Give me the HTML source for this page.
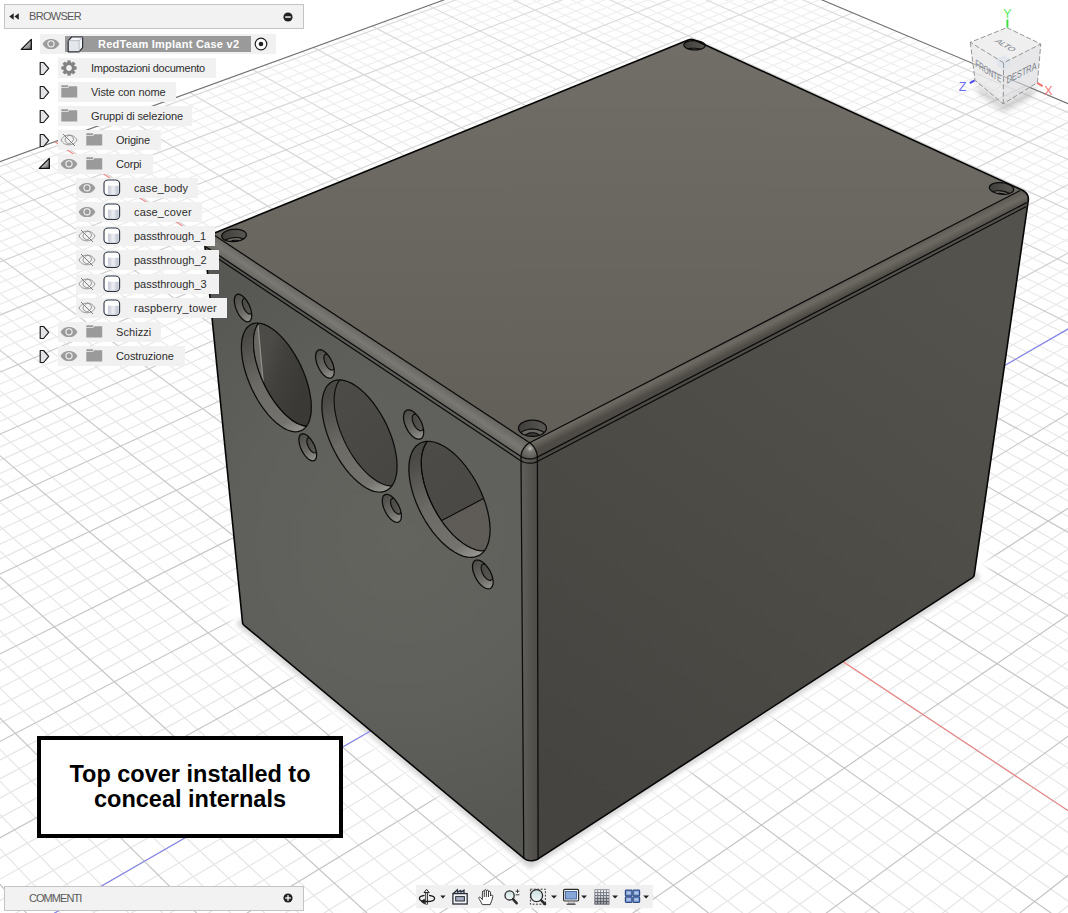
<!DOCTYPE html>
<html><head><meta charset="utf-8"><title>RedTeam Implant Case v2</title>
<style>
html,body{margin:0;padding:0;background:#fff;}
body{width:1068px;height:913px;position:relative;overflow:hidden;font-family:"Liberation Sans",sans-serif;}
svg#scene{position:absolute;left:0;top:0;}
.gm{stroke:#e6e6e6;stroke-width:1.2;fill:none;}
.gM{stroke:#c6c6c6;stroke-width:1.2;fill:none;}
.gb{fill:none;stroke:#707070;stroke-width:1.1;}
.ax{stroke:#f08585;stroke-width:1.1;fill:none;}
.az{stroke:#8585f0;stroke-width:1.1;fill:none;}
.e{stroke:#0c0c0c;stroke-width:1.25;stroke-linecap:round;stroke-linejoin:round;}
path.e:not([fill]){fill:none;}
.e2{stroke:#0c0c0c;stroke-width:1.1;stroke-linejoin:round;}
.s{fill:none;stroke:#060606;stroke-width:1.6;stroke-linejoin:round;}

.ui{position:absolute;left:0;top:0;width:1068px;height:913px;font-size:11px;color:#2e2e2e;}
.ui div,.ui span,.ui svg{position:absolute;}
.hdr{left:4px;width:298px;height:23px;background:#f2f2f2;border:1px solid #c4c4c4;box-sizing:content-box;}
.hdr span{left:24px;top:5px;color:#5a5a5a;font-size:11px;letter-spacing:-0.7px;line-height:13px;white-space:nowrap;}
.rb{background:#f1f1f1;height:19.5px;}
.t{white-space:nowrap;line-height:13px;letter-spacing:-0.23px;font-size:11px;}
.hl{background:#9a9a9a;height:16px;}
.tb{color:#fff;font-weight:bold;letter-spacing:0.25px;white-space:nowrap;line-height:13px;font-size:11px;}
.note{left:37px;top:736px;width:298px;height:93.5px;border:4px solid #000;background:#fff;box-sizing:content-box;}
.note div{left:0;width:298px;text-align:center;font-weight:bold;font-size:23.5px;line-height:26px;color:#000;white-space:nowrap;}
.tbar{left:416px;top:886px;width:238px;height:22px;background:#f0f0f0;}

</style></head><body>
<svg id="scene" width="1068" height="913" viewBox="0 0 1068 913">
<defs>
<filter id="blur" x="-20%" y="-20%" width="140%" height="140%"><feGaussianBlur stdDeviation="4"/></filter>
<filter id="b2" x="-20%" y="-20%" width="140%" height="140%"><feGaussianBlur stdDeviation="2.2"/></filter>
<linearGradient id="fade" gradientUnits="userSpaceOnUse" x1="0" y1="0" x2="0" y2="520"><stop offset="0" stop-color="#fff" stop-opacity="0.4"/><stop offset="1" stop-color="#fff" stop-opacity="0"/></linearGradient>
<filter id="b1" x="-100%" y="-100%" width="300%" height="300%"><feGaussianBlur stdDeviation="0.8"/></filter>
<radialGradient id="gl" gradientUnits="userSpaceOnUse" cx="400" cy="540" r="300"><stop offset="0" stop-color="#64645f"/><stop offset="0.55" stop-color="#5f5f5b"/><stop offset="1" stop-color="#575753"/></radialGradient>
<linearGradient id="gr" gradientUnits="userSpaceOnUse" x1="580" y1="800" x2="960" y2="280"><stop offset="0" stop-color="#464440"/><stop offset="0.5" stop-color="#4d4b46"/><stop offset="1" stop-color="#54524d"/></linearGradient>
<linearGradient id="gf" gradientUnits="userSpaceOnUse" x1="523" y1="0" x2="538" y2="0"><stop offset="0" stop-color="#5e5d59"/><stop offset="1" stop-color="#4e4b46"/></linearGradient>
<linearGradient id="gt" gradientUnits="userSpaceOnUse" x1="0" y1="40" x2="0" y2="445"><stop offset="0" stop-color="#716e67"/><stop offset="1" stop-color="#625f59"/></linearGradient>
<linearGradient id="gfl" gradientUnits="userSpaceOnUse" x1="372" y1="338" x2="362" y2="353"><stop offset="0" stop-color="#67655f"/><stop offset="0.5" stop-color="#7b7973"/><stop offset="1" stop-color="#62615c"/></linearGradient>
<linearGradient id="gfr" gradientUnits="userSpaceOnUse" x1="770" y1="316" x2="777" y2="330"><stop offset="0" stop-color="#5e5b55"/><stop offset="0.45" stop-color="#6d6a63"/><stop offset="1" stop-color="#4e4b46"/></linearGradient>
<radialGradient id="gsp" gradientUnits="userSpaceOnUse" cx="530" cy="448" r="12"><stop offset="0" stop-color="#8a8882"/><stop offset="1" stop-color="#55534e"/></radialGradient>
<linearGradient id="gw0" gradientUnits="userSpaceOnUse" x1="240" y1="340" x2="300" y2="440"><stop offset="0" stop-color="#4a4945"/><stop offset="0.4" stop-color="#6b6a65"/><stop offset="0.8" stop-color="#73726d"/><stop offset="1" stop-color="#a5a49e"/></linearGradient>
<linearGradient id="gw1" gradientUnits="userSpaceOnUse" x1="322" y1="400" x2="385" y2="500"><stop offset="0" stop-color="#4a4945"/><stop offset="0.4" stop-color="#6b6a65"/><stop offset="0.8" stop-color="#73726d"/><stop offset="1" stop-color="#a5a49e"/></linearGradient>
<linearGradient id="gw2" gradientUnits="userSpaceOnUse" x1="410" y1="460" x2="475" y2="565"><stop offset="0" stop-color="#4a4945"/><stop offset="0.4" stop-color="#6b6a65"/><stop offset="0.8" stop-color="#73726d"/><stop offset="1" stop-color="#a5a49e"/></linearGradient>
<linearGradient id="gi0" gradientUnits="userSpaceOnUse" x1="260" y1="370" x2="305" y2="385"><stop offset="0" stop-color="#4d4b47"/><stop offset="0.4" stop-color="#42403c"/><stop offset="1" stop-color="#3b3936"/></linearGradient>
<linearGradient id="gi1" gradientUnits="userSpaceOnUse" x1="330" y1="400" x2="400" y2="470"><stop offset="0" stop-color="#4d4b47"/><stop offset="1" stop-color="#484642"/></linearGradient>
<linearGradient id="gi2" gradientUnits="userSpaceOnUse" x1="420" y1="450" x2="490" y2="520"><stop offset="0" stop-color="#4d4b47"/><stop offset="1" stop-color="#4a4844"/></linearGradient>
<linearGradient id="gs" gradientUnits="objectBoundingBox" x1="0.3" y1="0" x2="0.7" y2="1"><stop offset="0" stop-color="#4e4d49"/><stop offset="0.6" stop-color="#6a6964"/><stop offset="1" stop-color="#8e8d88"/></linearGradient>
<linearGradient id="gsi" gradientUnits="objectBoundingBox" x1="0" y1="0" x2="1" y2="0.3"><stop offset="0" stop-color="#484642"/><stop offset="1" stop-color="#5a5853"/></linearGradient>
<linearGradient id="gsc" gradientUnits="objectBoundingBox" x1="0" y1="0" x2="1" y2="0"><stop offset="0" stop-color="#3f3e3a"/><stop offset="1" stop-color="#5a5853"/></linearGradient>
<clipPath id="csil"><path d="M204.7 244.5L204.7 242.8L204.9 241.8L205.3 240.2L206.1 238.7L206.5 237.9L207.6 236.8L208.2 236.1L209.1 235.5L210.1 234.9L210.9 234.5L688.1 40.0L688.9 39.8L689.7 39.6L690.3 39.5L691.0 39.4L691.6 39.4L692.2 39.5L692.9 39.6L693.4 39.7L694.2 39.9L695.0 40.2L1022.9 190.4L1023.6 190.8L1024.6 191.5L1025.4 192.2L1026.0 192.8L1027.0 194.0L1027.6 195.4L1028.0 196.3L1028.3 197.9L1028.4 198.8L1028.3 200.5L974.2 575.1L973.9 576.1L973.2 577.0L972.2 577.8L538.1 858.9L536.5 859.7L534.7 860.3L532.7 860.7L530.8 860.7L528.8 860.5L526.9 860.0L525.2 859.2L523.8 858.2L244.1 625.3L243.2 624.4L242.7 623.4L242.5 622.3Z"/></clipPath>
<clipPath id="co0"><path d="M241.7 353.7L241.4 348.4L241.5 343.5L242.1 339.0L243.1 335.0L244.5 331.5L246.3 328.5L248.5 326.2L251.0 324.4L253.9 323.4L257.1 323.0L260.5 323.4L264.1 324.4L267.9 326.1L271.8 328.5L275.8 331.5L279.8 335.1L283.7 339.3L287.6 343.9L291.3 349.1L294.8 354.6L298.1 360.4L301.1 366.4L303.8 372.6L306.1 378.8L308.0 385.0L309.5 391.1L310.5 397.0L311.2 402.7L311.3 408.0L311.1 412.9L310.3 417.3L309.2 421.3L307.6 424.6L305.6 427.4L303.3 429.5L300.6 430.9L297.6 431.7L294.4 431.8L291.0 431.2L287.4 430.0L283.6 428.1L279.8 425.6L275.9 422.5L272.1 418.9L268.3 414.8L264.6 410.2L261.1 405.3L257.7 400.0L254.6 394.4L251.7 388.7L249.2 382.8L246.9 376.8L245.0 370.8L243.5 365.0L242.4 359.2Z"/></clipPath>
<clipPath id="ci0"><path d="M253.7 348.3L253.5 343.1L253.6 338.2L254.2 333.7L255.2 329.6L256.7 326.1L258.5 323.2L260.7 320.8L263.3 319.1L266.2 318.0L269.3 317.7L272.8 318.0L276.4 319.0L280.2 320.7L284.1 323.0L288.1 326.0L292.1 329.6L296.1 333.8L299.9 338.4L303.6 343.5L307.1 349.0L310.4 354.8L313.4 360.8L316.0 366.9L318.3 373.1L320.2 379.3L321.7 385.4L322.8 391.3L323.4 396.9L323.5 402.3L323.2 407.2L322.4 411.6L321.3 415.5L319.7 418.9L317.7 421.6L315.3 423.8L312.6 425.2L309.6 426.0L306.4 426.1L302.9 425.6L299.3 424.3L295.5 422.5L291.7 420.0L287.9 416.9L284.0 413.3L280.2 409.2L276.5 404.7L273.0 399.8L269.6 394.5L266.5 389.0L263.7 383.2L261.1 377.3L258.9 371.4L257.0 365.4L255.5 359.6L254.4 353.8Z"/></clipPath>
<clipPath id="co1"><path d="M322.0 410.3L321.9 405.0L322.2 400.0L323.0 395.5L324.2 391.4L325.8 387.9L327.9 385.0L330.4 382.7L333.3 381.0L336.4 380.1L339.9 379.8L343.7 380.3L347.6 381.5L351.8 383.4L356.0 386.0L360.3 389.2L364.6 393.1L368.8 397.5L372.9 402.4L376.8 407.8L380.5 413.5L384.0 419.6L387.1 425.8L389.8 432.2L392.2 438.7L394.1 445.1L395.5 451.3L396.5 457.4L397.0 463.2L397.0 468.6L396.6 473.6L395.6 478.1L394.2 482.0L392.4 485.3L390.1 488.0L387.4 490.1L384.5 491.4L381.2 492.1L377.6 492.0L373.8 491.3L369.9 489.9L365.8 487.8L361.7 485.1L357.6 481.8L353.5 477.9L349.4 473.6L345.5 468.8L341.8 463.6L338.2 458.1L335.0 452.3L332.0 446.3L329.4 440.2L327.1 434.1L325.2 427.9L323.7 421.9L322.6 416.0Z"/></clipPath>
<clipPath id="co2"><path d="M408.9 471.6L408.9 466.1L409.4 461.1L410.4 456.5L411.9 452.4L413.8 448.9L416.2 446.0L419.1 443.8L422.3 442.3L425.8 441.4L429.7 441.4L433.8 442.0L438.1 443.4L442.6 445.5L447.2 448.3L451.9 451.8L456.5 455.9L461.0 460.6L465.4 465.8L469.5 471.5L473.5 477.5L477.1 483.8L480.3 490.3L483.1 497.0L485.5 503.6L487.4 510.2L488.8 516.7L489.7 522.9L490.1 528.8L489.9 534.3L489.2 539.3L488.0 543.8L486.3 547.8L484.2 551.1L481.6 553.7L478.6 555.7L475.2 556.9L471.6 557.4L467.6 557.2L463.5 556.3L459.2 554.6L454.8 552.3L450.3 549.4L445.8 545.8L441.4 541.7L437.1 537.1L432.9 532.1L429.0 526.6L425.2 520.8L421.8 514.8L418.7 508.6L416.0 502.3L413.7 495.9L411.8 489.6L410.4 483.4L409.4 477.3Z"/></clipPath>
<clipPath id="ci2"><path d="M421.3 465.3L421.3 459.9L421.8 454.9L422.9 450.3L424.4 446.2L426.3 442.7L428.8 439.8L431.6 437.6L434.8 436.0L438.4 435.2L442.3 435.1L446.4 435.7L450.8 437.1L455.3 439.2L459.9 442.0L464.5 445.4L469.1 449.5L473.6 454.2L478.0 459.4L482.2 465.0L486.1 471.0L489.7 477.3L492.9 483.7L495.7 490.4L498.1 497.0L500.0 503.6L501.3 510.0L502.2 516.2L502.6 522.1L502.4 527.6L501.6 532.6L500.4 537.2L498.7 541.1L496.5 544.4L493.9 547.0L490.9 549.0L487.5 550.2L483.8 550.8L479.9 550.6L475.7 549.7L471.4 548.1L467.0 545.8L462.5 542.9L458.0 539.3L453.6 535.3L449.3 530.7L445.1 525.6L441.2 520.2L437.5 514.5L434.1 508.5L431.0 502.3L428.3 496.0L426.0 489.6L424.1 483.3L422.7 477.1L421.7 471.1Z"/></clipPath>
<clipPath id="cm0"><path d="M234.4 302.2L234.3 299.9L234.6 297.8L235.2 296.2L236.1 295.0L237.2 294.4L238.6 294.2L240.2 294.6L241.8 295.5L243.6 296.9L245.2 298.7L246.9 300.9L248.3 303.4L249.6 306.0L250.6 308.7L251.3 311.4L251.6 314.0L251.7 316.3L251.4 318.3L250.8 319.9L249.9 321.1L248.7 321.7L247.3 321.9L245.8 321.4L244.1 320.5L242.4 319.1L240.7 317.3L239.1 315.2L237.7 312.7L236.5 310.1L235.5 307.4L234.8 304.7Z"/></clipPath>
<clipPath id="cm1"><path d="M298.9 440.9L298.9 438.7L299.2 436.8L299.9 435.3L300.9 434.3L302.1 433.8L303.5 433.8L305.1 434.3L306.9 435.3L308.6 436.8L310.3 438.7L311.9 440.9L313.4 443.4L314.7 446.0L315.6 448.7L316.3 451.3L316.6 453.7L316.6 456.0L316.3 457.8L315.6 459.3L314.6 460.3L313.4 460.8L311.9 460.8L310.3 460.2L308.6 459.2L306.9 457.7L305.2 455.8L303.6 453.6L302.1 451.2L300.9 448.6L299.9 445.9L299.3 443.3Z"/></clipPath>
<clipPath id="cm2"><path d="M315.6 357.7L315.6 355.3L316.0 353.3L316.7 351.6L317.7 350.5L319.0 349.8L320.5 349.7L322.2 350.2L324.0 351.2L325.9 352.7L327.7 354.6L329.4 356.9L330.9 359.4L332.2 362.2L333.2 365.0L333.9 367.8L334.3 370.4L334.2 372.8L333.9 374.8L333.1 376.4L332.1 377.5L330.8 378.2L329.2 378.2L327.5 377.7L325.7 376.7L323.9 375.3L322.1 373.3L320.5 371.1L319.0 368.5L317.7 365.8L316.7 363.0L316.0 360.3Z"/></clipPath>
<clipPath id="cm3"><path d="M382.3 501.4L382.3 499.2L382.8 497.3L383.5 495.8L384.6 494.9L386.0 494.4L387.6 494.4L389.4 495.0L391.2 496.1L393.1 497.7L394.9 499.7L396.6 502.1L398.2 504.6L399.5 507.4L400.5 510.1L401.1 512.8L401.4 515.3L401.3 517.6L400.9 519.5L400.1 520.9L399.0 521.9L397.6 522.3L396.0 522.2L394.2 521.6L392.4 520.5L390.5 518.9L388.7 516.9L387.0 514.6L385.5 512.0L384.2 509.3L383.2 506.6L382.6 503.9Z"/></clipPath>
<clipPath id="cm4"><path d="M403.5 417.7L403.6 415.3L404.1 413.2L404.9 411.6L406.1 410.5L407.5 409.9L409.2 409.8L411.1 410.4L413.0 411.5L415.0 413.1L417.0 415.1L418.8 417.5L420.4 420.2L421.7 423.0L422.7 425.9L423.4 428.8L423.7 431.5L423.6 433.9L423.1 436.0L422.3 437.6L421.1 438.7L419.6 439.2L417.9 439.2L416.1 438.7L414.1 437.6L412.1 436.0L410.2 433.9L408.4 431.6L406.9 428.9L405.5 426.1L404.5 423.2L403.8 420.4Z"/></clipPath>
<clipPath id="cm5"><path d="M472.5 567.0L472.6 564.7L473.2 562.8L474.1 561.3L475.3 560.4L476.8 560.0L478.6 560.1L480.5 560.8L482.5 562.0L484.6 563.7L486.5 565.8L488.3 568.3L490.0 571.0L491.3 573.8L492.3 576.7L492.9 579.4L493.2 582.0L493.0 584.3L492.4 586.2L491.5 587.6L490.3 588.5L488.7 588.9L486.9 588.7L485.0 588.0L483.0 586.8L481.0 585.1L479.1 583.0L477.3 580.6L475.7 577.9L474.4 575.1L473.4 572.3L472.7 569.5Z"/></clipPath>
<clipPath id="cs0"><path d="M523.2 422.2L524.9 421.4L526.9 420.8L528.9 420.4L531.1 420.2L533.3 420.2L535.4 420.4L537.5 420.7L539.5 421.3L541.3 422.0L542.9 422.9L544.2 423.9L545.3 425.0L546.0 426.2L546.4 427.4L546.4 428.7L546.1 430.0L545.5 431.2L544.5 432.3L543.3 433.4L541.8 434.3L540.0 435.1L538.1 435.7L536.0 436.1L533.8 436.3L531.6 436.3L529.4 436.1L527.3 435.8L525.3 435.2L523.5 434.5L521.9 433.6L520.6 432.6L519.6 431.4L518.9 430.2L518.5 429.0L518.5 427.7L518.8 426.5L519.4 425.3L520.4 424.1L521.6 423.1Z"/></clipPath>
<clipPath id="ct0"><path d="M527.4 433.8L528.3 433.4L529.4 433.1L530.5 432.9L531.7 432.8L532.9 432.7L534.1 432.8L535.2 433.0L536.3 433.3L537.3 433.7L538.1 434.2L538.8 434.8L539.4 435.4L539.8 436.0L540.0 436.7L540.0 437.4L539.9 438.1L539.5 438.8L539.0 439.4L538.3 440.0L537.5 440.5L536.5 440.9L535.5 441.2L534.3 441.4L533.2 441.6L532.0 441.6L530.8 441.5L529.6 441.3L528.6 441.0L527.6 440.6L526.7 440.1L526.0 439.5L525.4 438.9L525.0 438.2L524.8 437.6L524.8 436.9L525.0 436.2L525.3 435.5L525.9 434.9L526.6 434.3Z"/></clipPath>
<clipPath id="cs1"><path d="M992.1 184.1L993.4 183.5L994.9 183.1L996.6 182.8L998.3 182.7L1000.2 182.6L1002.1 182.8L1004.0 183.0L1005.8 183.4L1007.5 183.9L1009.1 184.6L1010.5 185.3L1011.6 186.1L1012.6 187.0L1013.2 187.9L1013.6 188.8L1013.6 189.7L1013.4 190.6L1012.9 191.4L1012.1 192.2L1011.0 192.8L1009.7 193.4L1008.2 193.8L1006.5 194.1L1004.7 194.3L1002.8 194.3L1000.9 194.2L999.0 193.9L997.2 193.5L995.5 193.0L993.9 192.3L992.5 191.6L991.3 190.8L990.4 189.9L989.8 189.0L989.4 188.1L989.4 187.2L989.6 186.3L990.2 185.5L991.0 184.8Z"/></clipPath>
<clipPath id="ct1"><path d="M995.3 194.2L996.0 193.9L996.8 193.7L997.7 193.5L998.7 193.4L999.7 193.4L1000.7 193.5L1001.7 193.6L1002.7 193.9L1003.7 194.1L1004.5 194.5L1005.3 194.9L1005.9 195.3L1006.4 195.8L1006.8 196.3L1007.0 196.8L1007.0 197.3L1006.9 197.8L1006.6 198.2L1006.1 198.6L1005.5 199.0L1004.8 199.3L1004.0 199.5L1003.1 199.7L1002.1 199.8L1001.1 199.8L1000.1 199.7L999.0 199.6L998.0 199.4L997.1 199.1L996.2 198.7L995.5 198.3L994.9 197.9L994.4 197.4L994.0 196.9L993.8 196.4L993.8 195.9L993.9 195.4L994.2 195.0L994.7 194.6Z"/></clipPath>
<clipPath id="cs2"><path d="M687.0 41.8L688.2 41.4L689.7 41.0L691.2 40.8L692.8 40.7L694.5 40.6L696.2 40.7L697.8 40.9L699.3 41.3L700.7 41.7L702.0 42.2L703.1 42.7L704.0 43.4L704.6 44.1L705.0 44.8L705.2 45.5L705.0 46.2L704.6 46.9L704.0 47.6L703.1 48.2L702.0 48.7L700.8 49.2L699.3 49.5L697.8 49.8L696.1 49.9L694.5 49.9L692.8 49.8L691.2 49.6L689.6 49.3L688.2 48.9L686.9 48.4L685.8 47.8L685.0 47.1L684.3 46.4L683.9 45.7L683.8 45.0L684.0 44.3L684.4 43.6L685.0 42.9L685.9 42.3Z"/></clipPath>
<clipPath id="ct2"><path d="M690.0 51.0L690.7 50.7L691.5 50.5L692.4 50.4L693.2 50.3L694.1 50.3L695.1 50.4L695.9 50.5L696.8 50.7L697.6 50.9L698.2 51.2L698.8 51.5L699.3 51.8L699.7 52.2L699.9 52.6L699.9 53.0L699.9 53.4L699.7 53.8L699.3 54.1L698.8 54.5L698.2 54.8L697.5 55.0L696.8 55.2L695.9 55.3L695.0 55.4L694.1 55.4L693.2 55.3L692.3 55.2L691.5 55.1L690.7 54.8L690.0 54.6L689.4 54.2L689.0 53.9L688.6 53.5L688.4 53.1L688.3 52.7L688.4 52.3L688.6 51.9L689.0 51.6L689.5 51.2Z"/></clipPath>
<clipPath id="cs3"><path d="M226.9 230.8L228.6 230.2L230.4 229.7L232.3 229.4L234.2 229.3L236.1 229.2L238.0 229.4L239.8 229.7L241.4 230.1L242.8 230.6L244.1 231.3L245.1 232.1L245.8 232.9L246.2 233.9L246.4 234.8L246.2 235.8L245.8 236.8L245.0 237.7L244.0 238.6L242.7 239.4L241.2 240.1L239.5 240.7L237.7 241.1L235.9 241.5L233.9 241.6L232.0 241.7L230.1 241.5L228.3 241.2L226.7 240.8L225.2 240.2L224.0 239.6L223.0 238.8L222.3 237.9L221.8 237.0L221.7 236.0L221.9 235.1L222.4 234.1L223.1 233.2L224.2 232.3L225.5 231.5Z"/></clipPath>
<clipPath id="ct3"><path d="M230.9 241.2L231.8 240.9L232.8 240.6L233.8 240.4L234.8 240.3L235.9 240.3L236.9 240.4L237.9 240.6L238.8 240.8L239.6 241.1L240.2 241.5L240.8 241.9L241.2 242.4L241.4 242.9L241.5 243.4L241.4 243.9L241.1 244.5L240.7 245.0L240.2 245.4L239.5 245.9L238.7 246.3L237.8 246.6L236.8 246.8L235.8 247.0L234.7 247.1L233.6 247.1L232.6 247.1L231.7 246.9L230.8 246.7L230.0 246.4L229.3 246.0L228.8 245.6L228.4 245.1L228.1 244.6L228.1 244.1L228.2 243.5L228.4 243.0L228.8 242.5L229.4 242.0L230.1 241.6Z"/></clipPath>
</defs>
<path class="gm" d="M600.4 3017.3 L2348.6 643.4M565.9 2959.2 L2322.7 632.5M532.3 2902.8 L2297.1 621.7M499.6 2847.8 L2271.9 611.1M436.8 2742.3 L2222.3 590.2M406.6 2691.6 L2197.9 579.9M377.3 2642.2 L2173.8 569.8M348.6 2594.1 L2150.0 559.7M293.5 2501.4 L2103.3 540.0M266.9 2456.8 L2080.3 530.3M241.0 2413.2 L2057.6 520.8M215.7 2370.7 L2035.2 511.3M166.9 2288.7 L1991.1 492.7M143.4 2249.1 L1969.4 483.6M120.4 2210.5 L1947.9 474.5M97.9 2172.6 L1926.7 465.6M54.4 2099.5 L1885.0 448.0M33.4 2064.2 L1864.5 439.3M12.8 2029.6 L1844.2 430.8M-7.4 1995.7 L1824.1 422.3M-46.4 1930.2 L1784.6 405.7M-65.3 1898.4 L1765.1 397.5M-83.8 1867.3 L1745.9 389.4M-101.9 1836.8 L1726.9 381.3M-137.1 1777.6 L1689.4 365.5M-154.2 1748.9 L1671.0 357.8M-170.9 1720.8 L1652.7 350.1M-187.4 1693.2 L1634.6 342.5M-219.3 1639.6 L1599.1 327.5M-234.8 1613.5 L1581.5 320.1M-250.0 1588.0 L1564.2 312.8M-264.9 1562.9 L1547.0 305.5M-294.0 1514.0 L1513.2 291.3M-308.1 1490.3 L1496.5 284.2M-322.0 1466.9 L1480.0 277.3M-335.6 1444.0 L1463.7 270.4M-362.2 1399.3 L1431.5 256.8M-375.1 1377.6 L1415.6 250.1M-387.9 1356.2 L1399.9 243.5M-400.4 1335.2 L1384.3 236.9M-424.8 1294.2 L1353.6 224.0M-436.7 1274.2 L1338.5 217.6M-448.4 1254.5 L1323.5 211.3M-459.9 1235.1 L1308.6 205.0M-482.4 1197.4 L1279.3 192.7M-493.3 1178.9 L1264.9 186.6M-504.1 1160.8 L1250.6 180.5M-514.8 1142.9 L1236.4 174.6M-535.5 1108.0 L1208.4 162.8M-545.7 1090.9 L1194.6 156.9M-555.7 1074.1 L1180.9 151.2M-565.5 1057.6 L1167.4 145.5M-584.8 1025.2 L1140.6 134.2M-594.2 1009.4 L1127.4 128.6M-603.5 993.8 L1114.3 123.1M-612.6 978.4 L1101.3 117.6M-630.5 948.3 L1075.7 106.8M-639.3 933.6 L1063.1 101.5M-647.9 919.1 L1050.5 96.2M-656.4 904.8 L1038.1 91.0M-673.1 876.7 L1013.6 80.6M-681.3 863.0 L1001.5 75.5M-689.3 849.5 L989.4 70.5M-697.3 836.1 L977.5 65.4M-712.9 809.9 L954.0 55.5M-720.5 797.1 L942.4 50.6M-728.1 784.4 L930.8 45.8M-735.5 771.9 L919.4 40.9M-750.1 747.4 L896.8 31.4M-757.2 735.3 L885.7 26.7M-764.3 723.4 L874.6 22.0M-771.3 711.7 L863.6 17.4M-785.0 688.7 L841.9 8.3M-791.7 677.4 L831.2 3.8M-798.3 666.3 L820.6 -0.7M-804.9 655.2 L810.0 -5.2M-817.8 633.6 L789.2 -14.0M-824.1 623.0 L778.9 -18.3M-830.3 612.5 L768.6 -22.6M-836.5 602.1 L758.5 -26.9M-848.6 581.7 L738.4 -35.4M-854.6 571.7 L728.5 -39.5M-860.5 561.8 L718.7 -43.7M-866.3 552.1 L708.9 -47.8M-877.7 532.8 L689.6 -56.0M-883.4 523.4 L680.0 -60.0M-888.9 514.0 L670.5 -64.0M-894.4 504.8 L661.1 -67.9"/>
<path class="gm" d="M673.5 3024.8 L-880.8 482.7M710.2 2973.7 L-859.1 474.8M745.9 2923.9 L-837.6 466.9M780.8 2875.3 L-816.2 459.2M848.2 2781.4 L-774.2 443.8M880.7 2736.1 L-753.5 436.3M912.5 2691.7 L-732.9 428.8M943.6 2648.4 L-712.6 421.4M1003.8 2564.6 L-672.4 406.7M1032.9 2524.1 L-652.6 399.5M1061.4 2484.4 L-633.0 392.4M1089.2 2445.6 L-613.5 385.3M1143.3 2370.3 L-575.1 371.3M1169.4 2333.8 L-556.2 364.4M1195.1 2298.1 L-537.4 357.6M1220.2 2263.1 L-518.8 350.8M1269.0 2195.1 L-482.1 337.4M1292.6 2162.2 L-464.0 330.8M1315.9 2129.8 L-446.0 324.2M1338.6 2098.1 L-428.2 317.8M1382.9 2036.4 L-393.1 304.9M1404.4 2006.5 L-375.7 298.6M1425.5 1977.0 L-358.5 292.3M1446.2 1948.2 L-341.4 286.1M1486.6 1891.9 L-307.7 273.8M1506.2 1864.6 L-291.1 267.8M1525.5 1837.7 L-274.6 261.8M1544.5 1811.3 L-258.2 255.8M1581.4 1759.9 L-225.9 244.0M1599.4 1734.8 L-209.9 238.2M1617.1 1710.2 L-194.1 232.4M1634.4 1685.9 L-178.4 226.7M1668.4 1638.7 L-147.3 215.4M1684.9 1615.6 L-132.0 209.8M1701.2 1592.9 L-116.8 204.2M1717.2 1570.6 L-101.7 198.7M1748.5 1527.0 L-71.8 187.9M1763.8 1505.8 L-57.1 182.5M1778.8 1484.8 L-42.5 177.2M1793.6 1464.2 L-28.0 171.9M1822.5 1423.9 L0.7 161.4M1836.6 1404.2 L14.9 156.3M1850.6 1384.8 L29.0 151.1M1864.3 1365.7 L42.9 146.0M1891.1 1328.3 L70.6 136.0M1904.2 1310.1 L84.2 131.0M1917.2 1292.0 L97.8 126.1M1929.9 1274.3 L111.2 121.2M1954.9 1239.5 L137.8 111.5M1967.1 1222.5 L150.9 106.7M1979.1 1205.7 L164.0 101.9M1991.0 1189.2 L176.9 97.2M2014.2 1156.8 L202.6 87.9M2025.6 1140.9 L215.3 83.2M2036.9 1125.2 L227.8 78.6M2048.0 1109.8 L240.3 74.1M2069.7 1079.5 L265.0 65.1M2080.4 1064.6 L277.3 60.6M2090.9 1050.0 L289.4 56.2M2101.3 1035.5 L301.5 51.8M2121.7 1007.1 L325.3 43.1M2131.6 993.2 L337.1 38.8M2141.5 979.5 L348.8 34.5M2151.3 965.9 L360.5 30.3M2170.4 939.2 L383.5 21.9M2179.8 926.2 L394.9 17.8M2189.0 913.3 L406.2 13.6M2198.2 900.5 L417.5 9.5M2216.2 875.4 L439.7 1.4M2225.0 863.1 L450.7 -2.6M2233.7 851.0 L461.7 -6.6M2242.3 839.0 L472.6 -10.5M2259.3 815.4 L494.1 -18.4M2267.6 803.8 L504.7 -22.3M2275.8 792.3 L515.3 -26.1M2284.0 781.0 L525.8 -30.0M2300.0 758.7 L546.6 -37.5M2307.8 747.7 L556.9 -41.3M2315.6 736.9 L567.2 -45.0M2323.3 726.2 L577.3 -48.7M2338.4 705.1 L597.5 -56.1M2345.8 694.8 L607.5 -59.7M2353.2 684.5 L617.4 -63.3M2360.4 674.4 L627.2 -66.9M2374.8 654.5 L646.7 -74.0"/>
<path class="gM" d="M636.0 3077.1 L2374.8 654.5M467.8 2794.3 L2246.9 600.6M320.7 2547.2 L2126.5 549.8M191.1 2329.2 L2013.0 502.0M75.9 2135.7 L1905.7 456.7M-27.1 1962.6 L1804.2 413.9M-119.7 1806.9 L1708.0 373.4M-203.5 1666.1 L1616.8 334.9M-279.6 1538.2 L1530.0 298.4M-349.0 1421.5 L1447.5 263.6M-412.7 1314.5 L1368.9 230.4M-471.2 1216.1 L1293.9 198.8M-525.2 1125.3 L1222.3 168.6M-575.2 1041.3 L1153.9 139.8M-621.6 963.3 L1088.5 112.2M-664.8 890.7 L1025.8 85.8M-705.1 822.9 L965.7 60.5M-742.8 759.5 L908.1 36.2M-778.2 700.1 L852.7 12.8M-811.4 644.4 L799.6 -9.6M-842.6 591.9 L748.4 -31.2M-872.0 542.4 L699.2 -51.9M-899.8 495.7 L651.8 -71.9"/>
<path class="gM" d="M636.0 3077.1 L-902.8 490.7M814.9 2827.8 L-795.1 451.5M974.1 2606.1 L-692.4 414.0M1116.5 2407.5 L-594.2 378.3M1244.8 2228.8 L-500.4 344.1M1361.0 2067.0 L-410.6 311.3M1466.6 1919.8 L-324.5 280.0M1563.1 1785.4 L-242.0 249.9M1651.6 1662.1 L-162.8 221.0M1733.0 1548.7 L-86.7 193.3M1808.2 1443.9 L-13.6 166.6M1877.8 1346.9 L56.8 141.0M1942.5 1256.8 L124.5 116.3M2002.7 1172.9 L189.8 92.5M2058.9 1094.5 L252.7 69.6M2111.5 1021.2 L313.4 47.4M2160.9 952.5 L372.0 26.1M2207.2 887.9 L428.6 5.5M2250.9 827.1 L483.3 -14.5M2292.0 769.8 L536.3 -33.8M2330.9 715.6 L587.4 -52.4M2367.6 664.4 L637.0 -70.5"/>
<rect x="0" y="0" width="1068" height="520" fill="url(#fade)"/>
<path d="M636.0 3077.1L-902.8 490.7L646.7 -74.0L2374.8 654.5Z" class="gb"/>
<path d="M238.9 621.0L530.5 863.8L977.9 574.1L981.2 551.4L530.4 839.8L236.6 598.1Z" fill="#fff" stroke="#fff" stroke-width="17" stroke-linejoin="round" filter="url(#blur)"/>
<path d="M238.9 621.0L530.5 863.8L977.9 574.1" fill="none" stroke="#000" stroke-opacity="0.16" stroke-width="9" stroke-linejoin="round" filter="url(#b2)"/>
<path d="M1877.8 1346.9 L695.4 563.9M516.2 446.8 L54.9 141.7" class="ax"/>
<path d="M-471.2 1216.1 L1293.9 198.8" class="az"/>
<g clip-path="url(#csil)">
<path d="M204.7 244.5L204.7 242.8L204.9 241.8L205.3 240.2L206.1 238.7L206.5 237.9L207.6 236.8L208.2 236.1L209.1 235.5L210.1 234.9L210.9 234.5L688.1 40.0L688.9 39.8L689.7 39.6L690.3 39.5L691.0 39.4L691.6 39.4L692.2 39.5L692.9 39.6L693.4 39.7L694.2 39.9L695.0 40.2L1022.9 190.4L1023.6 190.8L1024.6 191.5L1025.4 192.2L1026.0 192.8L1027.0 194.0L1027.6 195.4L1028.0 196.3L1028.3 197.9L1028.4 198.8L1028.3 200.5L974.2 575.1L973.9 576.1L973.2 577.0L972.2 577.8L538.1 858.9L536.5 859.7L534.7 860.3L532.7 860.7L530.8 860.7L528.8 860.5L526.9 860.0L525.2 859.2L523.8 858.2L244.1 625.3L243.2 624.4L242.7 623.4L242.5 622.3Z" fill="url(#gl)"/>
<path d="M238.9 621.0L523.8 858.2L521.0 456.6L200.8 243.4Z" fill="url(#gl)"/>
<path d="M538.1 858.9L981.6 571.7L1036.5 197.6L537.4 457.1Z" fill="url(#gr)"/>
<path d="M523.8 863.0L538.1 863.6L537.4 457.1L521.0 456.6Z" fill="url(#gf)"/>
<path d="M200.8 243.4L521.0 456.6L529.7 442.7L214.0 235.1Z" fill="url(#gfl)"/>
<path d="M537.4 457.1L1032.4 199.7L1019.6 190.8L529.7 442.7Z" fill="url(#gfr)"/>
<path d="M521.0 456.6L521.0 456.6L522.3 457.3L523.8 457.9L525.4 458.4L527.2 458.7L529.0 458.8L530.8 458.8L532.6 458.6L534.3 458.3L535.9 457.8L537.4 457.1L537.4 457.1L537.3 455.6L537.0 454.0L536.5 452.3L535.9 450.7L535.1 449.0L534.2 447.5L533.2 446.0L532.0 444.7L530.9 443.6L529.7 442.7L529.7 442.7L528.3 443.5L527.0 444.5L525.7 445.7L524.6 447.1L523.5 448.6L522.6 450.2L521.9 451.8L521.4 453.4L521.1 455.0L521.0 456.6Z" fill="url(#gsp)"/>
<path d="M529.7 442.7L195.5 223.0L691.8 23.3L1039.5 180.5Z" fill="url(#gt)"/>
</g>
<path d="M241.7 353.7L241.4 348.4L241.5 343.5L242.1 339.0L243.1 335.0L244.5 331.5L246.3 328.5L248.5 326.2L251.0 324.4L253.9 323.4L257.1 323.0L260.5 323.4L264.1 324.4L267.9 326.1L271.8 328.5L275.8 331.5L279.8 335.1L283.7 339.3L287.6 343.9L291.3 349.1L294.8 354.6L298.1 360.4L301.1 366.4L303.8 372.6L306.1 378.8L308.0 385.0L309.5 391.1L310.5 397.0L311.2 402.7L311.3 408.0L311.1 412.9L310.3 417.3L309.2 421.3L307.6 424.6L305.6 427.4L303.3 429.5L300.6 430.9L297.6 431.7L294.4 431.8L291.0 431.2L287.4 430.0L283.6 428.1L279.8 425.6L275.9 422.5L272.1 418.9L268.3 414.8L264.6 410.2L261.1 405.3L257.7 400.0L254.6 394.4L251.7 388.7L249.2 382.8L246.9 376.8L245.0 370.8L243.5 365.0L242.4 359.2Z" fill="url(#gw0)"/>
<g clip-path="url(#co0)">
<path d="M253.7 348.3L253.5 343.1L253.6 338.2L254.2 333.7L255.2 329.6L256.7 326.1L258.5 323.2L260.7 320.8L263.3 319.1L266.2 318.0L269.3 317.7L272.8 318.0L276.4 319.0L280.2 320.7L284.1 323.0L288.1 326.0L292.1 329.6L296.1 333.8L299.9 338.4L303.6 343.5L307.1 349.0L310.4 354.8L313.4 360.8L316.0 366.9L318.3 373.1L320.2 379.3L321.7 385.4L322.8 391.3L323.4 396.9L323.5 402.3L323.2 407.2L322.4 411.6L321.3 415.5L319.7 418.9L317.7 421.6L315.3 423.8L312.6 425.2L309.6 426.0L306.4 426.1L302.9 425.6L299.3 424.3L295.5 422.5L291.7 420.0L287.9 416.9L284.0 413.3L280.2 409.2L276.5 404.7L273.0 399.8L269.6 394.5L266.5 389.0L263.7 383.2L261.1 377.3L258.9 371.4L257.0 365.4L255.5 359.6L254.4 353.8Z" fill="url(#gi0)" class="e2"/>
<g clip-path="url(#ci0)"><path d="M235 315L258 324.9L263.3 383.3L272 440L235 440Z" fill="#696863"/><path d="M258 324.9L263.3 383.3" stroke="#93928d" stroke-width="1.2" fill="none"/></g>
<path d="M253.7 348.3L253.5 343.1L253.6 338.2L254.2 333.7L255.2 329.6L256.7 326.1L258.5 323.2L260.7 320.8L263.3 319.1L266.2 318.0L269.3 317.7L272.8 318.0L276.4 319.0L280.2 320.7L284.1 323.0L288.1 326.0L292.1 329.6L296.1 333.8L299.9 338.4L303.6 343.5L307.1 349.0L310.4 354.8L313.4 360.8L316.0 366.9L318.3 373.1L320.2 379.3L321.7 385.4L322.8 391.3L323.4 396.9L323.5 402.3L323.2 407.2L322.4 411.6L321.3 415.5L319.7 418.9L317.7 421.6L315.3 423.8L312.6 425.2L309.6 426.0L306.4 426.1L302.9 425.6L299.3 424.3L295.5 422.5L291.7 420.0L287.9 416.9L284.0 413.3L280.2 409.2L276.5 404.7L273.0 399.8L269.6 394.5L266.5 389.0L263.7 383.2L261.1 377.3L258.9 371.4L257.0 365.4L255.5 359.6L254.4 353.8Z" fill="none" class="e2"/>
</g>
<path d="M241.7 353.7L241.4 348.4L241.5 343.5L242.1 339.0L243.1 335.0L244.5 331.5L246.3 328.5L248.5 326.2L251.0 324.4L253.9 323.4L257.1 323.0L260.5 323.4L264.1 324.4L267.9 326.1L271.8 328.5L275.8 331.5L279.8 335.1L283.7 339.3L287.6 343.9L291.3 349.1L294.8 354.6L298.1 360.4L301.1 366.4L303.8 372.6L306.1 378.8L308.0 385.0L309.5 391.1L310.5 397.0L311.2 402.7L311.3 408.0L311.1 412.9L310.3 417.3L309.2 421.3L307.6 424.6L305.6 427.4L303.3 429.5L300.6 430.9L297.6 431.7L294.4 431.8L291.0 431.2L287.4 430.0L283.6 428.1L279.8 425.6L275.9 422.5L272.1 418.9L268.3 414.8L264.6 410.2L261.1 405.3L257.7 400.0L254.6 394.4L251.7 388.7L249.2 382.8L246.9 376.8L245.0 370.8L243.5 365.0L242.4 359.2Z" class="e" />
<path d="M322.0 410.3L321.9 405.0L322.2 400.0L323.0 395.5L324.2 391.4L325.8 387.9L327.9 385.0L330.4 382.7L333.3 381.0L336.4 380.1L339.9 379.8L343.7 380.3L347.6 381.5L351.8 383.4L356.0 386.0L360.3 389.2L364.6 393.1L368.8 397.5L372.9 402.4L376.8 407.8L380.5 413.5L384.0 419.6L387.1 425.8L389.8 432.2L392.2 438.7L394.1 445.1L395.5 451.3L396.5 457.4L397.0 463.2L397.0 468.6L396.6 473.6L395.6 478.1L394.2 482.0L392.4 485.3L390.1 488.0L387.4 490.1L384.5 491.4L381.2 492.1L377.6 492.0L373.8 491.3L369.9 489.9L365.8 487.8L361.7 485.1L357.6 481.8L353.5 477.9L349.4 473.6L345.5 468.8L341.8 463.6L338.2 458.1L335.0 452.3L332.0 446.3L329.4 440.2L327.1 434.1L325.2 427.9L323.7 421.9L322.6 416.0Z" fill="url(#gw1)"/>
<g clip-path="url(#co1)">
<path d="M334.3 404.6L334.1 399.2L334.5 394.2L335.3 389.7L336.5 385.6L338.2 382.1L340.3 379.2L342.8 376.9L345.7 375.2L348.9 374.3L352.4 374.0L356.1 374.5L360.1 375.7L364.2 377.6L368.5 380.1L372.8 383.3L377.1 387.2L381.3 391.6L385.4 396.5L389.3 401.8L393.0 407.5L396.4 413.5L399.5 419.8L402.3 426.1L404.6 432.6L406.5 438.9L407.9 445.2L408.9 451.3L409.4 457.0L409.4 462.4L408.9 467.4L407.9 471.9L406.5 475.8L404.6 479.2L402.3 481.9L399.6 483.9L396.6 485.3L393.3 485.9L389.7 485.9L386.0 485.2L382.0 483.8L377.9 481.7L373.8 479.0L369.6 475.8L365.5 471.9L361.5 467.6L357.6 462.8L353.8 457.7L350.3 452.2L347.1 446.4L344.1 440.4L341.5 434.4L339.2 428.2L337.3 422.1L335.9 416.1L334.8 410.2Z" fill="url(#gi1)" class="e2"/>
</g>
<path d="M322.0 410.3L321.9 405.0L322.2 400.0L323.0 395.5L324.2 391.4L325.8 387.9L327.9 385.0L330.4 382.7L333.3 381.0L336.4 380.1L339.9 379.8L343.7 380.3L347.6 381.5L351.8 383.4L356.0 386.0L360.3 389.2L364.6 393.1L368.8 397.5L372.9 402.4L376.8 407.8L380.5 413.5L384.0 419.6L387.1 425.8L389.8 432.2L392.2 438.7L394.1 445.1L395.5 451.3L396.5 457.4L397.0 463.2L397.0 468.6L396.6 473.6L395.6 478.1L394.2 482.0L392.4 485.3L390.1 488.0L387.4 490.1L384.5 491.4L381.2 492.1L377.6 492.0L373.8 491.3L369.9 489.9L365.8 487.8L361.7 485.1L357.6 481.8L353.5 477.9L349.4 473.6L345.5 468.8L341.8 463.6L338.2 458.1L335.0 452.3L332.0 446.3L329.4 440.2L327.1 434.1L325.2 427.9L323.7 421.9L322.6 416.0Z" class="e" />
<path d="M408.9 471.6L408.9 466.1L409.4 461.1L410.4 456.5L411.9 452.4L413.8 448.9L416.2 446.0L419.1 443.8L422.3 442.3L425.8 441.4L429.7 441.4L433.8 442.0L438.1 443.4L442.6 445.5L447.2 448.3L451.9 451.8L456.5 455.9L461.0 460.6L465.4 465.8L469.5 471.5L473.5 477.5L477.1 483.8L480.3 490.3L483.1 497.0L485.5 503.6L487.4 510.2L488.8 516.7L489.7 522.9L490.1 528.8L489.9 534.3L489.2 539.3L488.0 543.8L486.3 547.8L484.2 551.1L481.6 553.7L478.6 555.7L475.2 556.9L471.6 557.4L467.6 557.2L463.5 556.3L459.2 554.6L454.8 552.3L450.3 549.4L445.8 545.8L441.4 541.7L437.1 537.1L432.9 532.1L429.0 526.6L425.2 520.8L421.8 514.8L418.7 508.6L416.0 502.3L413.7 495.9L411.8 489.6L410.4 483.4L409.4 477.3Z" fill="url(#gw2)"/>
<g clip-path="url(#co2)">
<path d="M421.3 465.3L421.3 459.9L421.8 454.9L422.9 450.3L424.4 446.2L426.3 442.7L428.8 439.8L431.6 437.6L434.8 436.0L438.4 435.2L442.3 435.1L446.4 435.7L450.8 437.1L455.3 439.2L459.9 442.0L464.5 445.4L469.1 449.5L473.6 454.2L478.0 459.4L482.2 465.0L486.1 471.0L489.7 477.3L492.9 483.7L495.7 490.4L498.1 497.0L500.0 503.6L501.3 510.0L502.2 516.2L502.6 522.1L502.4 527.6L501.6 532.6L500.4 537.2L498.7 541.1L496.5 544.4L493.9 547.0L490.9 549.0L487.5 550.2L483.8 550.8L479.9 550.6L475.7 549.7L471.4 548.1L467.0 545.8L462.5 542.9L458.0 539.3L453.6 535.3L449.3 530.7L445.1 525.6L441.2 520.2L437.5 514.5L434.1 508.5L431.0 502.3L428.3 496.0L426.0 489.6L424.1 483.3L422.7 477.1L421.7 471.1Z" fill="url(#gi2)" class="e2"/>
<g clip-path="url(#ci2)"><path d="M266.1 612.6L692.7 388.9L967.8 552.5L532.0 830.1Z" fill="#5f5c57" class="e2"/></g>
<path d="M421.3 465.3L421.3 459.9L421.8 454.9L422.9 450.3L424.4 446.2L426.3 442.7L428.8 439.8L431.6 437.6L434.8 436.0L438.4 435.2L442.3 435.1L446.4 435.7L450.8 437.1L455.3 439.2L459.9 442.0L464.5 445.4L469.1 449.5L473.6 454.2L478.0 459.4L482.2 465.0L486.1 471.0L489.7 477.3L492.9 483.7L495.7 490.4L498.1 497.0L500.0 503.6L501.3 510.0L502.2 516.2L502.6 522.1L502.4 527.6L501.6 532.6L500.4 537.2L498.7 541.1L496.5 544.4L493.9 547.0L490.9 549.0L487.5 550.2L483.8 550.8L479.9 550.6L475.7 549.7L471.4 548.1L467.0 545.8L462.5 542.9L458.0 539.3L453.6 535.3L449.3 530.7L445.1 525.6L441.2 520.2L437.5 514.5L434.1 508.5L431.0 502.3L428.3 496.0L426.0 489.6L424.1 483.3L422.7 477.1L421.7 471.1Z" fill="none" class="e2"/>
</g>
<path d="M408.9 471.6L408.9 466.1L409.4 461.1L410.4 456.5L411.9 452.4L413.8 448.9L416.2 446.0L419.1 443.8L422.3 442.3L425.8 441.4L429.7 441.4L433.8 442.0L438.1 443.4L442.6 445.5L447.2 448.3L451.9 451.8L456.5 455.9L461.0 460.6L465.4 465.8L469.5 471.5L473.5 477.5L477.1 483.8L480.3 490.3L483.1 497.0L485.5 503.6L487.4 510.2L488.8 516.7L489.7 522.9L490.1 528.8L489.9 534.3L489.2 539.3L488.0 543.8L486.3 547.8L484.2 551.1L481.6 553.7L478.6 555.7L475.2 556.9L471.6 557.4L467.6 557.2L463.5 556.3L459.2 554.6L454.8 552.3L450.3 549.4L445.8 545.8L441.4 541.7L437.1 537.1L432.9 532.1L429.0 526.6L425.2 520.8L421.8 514.8L418.7 508.6L416.0 502.3L413.7 495.9L411.8 489.6L410.4 483.4L409.4 477.3Z" class="e" />
<path d="M234.4 302.2L234.3 299.9L234.6 297.8L235.2 296.2L236.1 295.0L237.2 294.4L238.6 294.2L240.2 294.6L241.8 295.5L243.6 296.9L245.2 298.7L246.9 300.9L248.3 303.4L249.6 306.0L250.6 308.7L251.3 311.4L251.6 314.0L251.7 316.3L251.4 318.3L250.8 319.9L249.9 321.1L248.7 321.7L247.3 321.9L245.8 321.4L244.1 320.5L242.4 319.1L240.7 317.3L239.1 315.2L237.7 312.7L236.5 310.1L235.5 307.4L234.8 304.7Z" fill="url(#gs)"/>
<g clip-path="url(#cm0)"><path d="M242.3 302.9L242.3 301.2L242.6 299.8L243.3 298.8L244.2 298.4L245.3 298.5L246.6 299.1L247.9 300.2L249.1 301.7L250.2 303.6L251.1 305.6L251.8 307.6L252.1 309.6L252.1 311.3L251.8 312.7L251.1 313.6L250.2 314.1L249.1 314.0L247.8 313.3L246.5 312.2L245.3 310.7L244.2 308.9L243.3 306.9L242.6 304.9Z" fill="url(#gsi)" class="e2"/></g>
<path d="M234.4 302.2L234.3 299.9L234.6 297.8L235.2 296.2L236.1 295.0L237.2 294.4L238.6 294.2L240.2 294.6L241.8 295.5L243.6 296.9L245.2 298.7L246.9 300.9L248.3 303.4L249.6 306.0L250.6 308.7L251.3 311.4L251.6 314.0L251.7 316.3L251.4 318.3L250.8 319.9L249.9 321.1L248.7 321.7L247.3 321.9L245.8 321.4L244.1 320.5L242.4 319.1L240.7 317.3L239.1 315.2L237.7 312.7L236.5 310.1L235.5 307.4L234.8 304.7Z" class="e"/>
<path d="M298.9 440.9L298.9 438.7L299.2 436.8L299.9 435.3L300.9 434.3L302.1 433.8L303.5 433.8L305.1 434.3L306.9 435.3L308.6 436.8L310.3 438.7L311.9 440.9L313.4 443.4L314.7 446.0L315.6 448.7L316.3 451.3L316.6 453.7L316.6 456.0L316.3 457.8L315.6 459.3L314.6 460.3L313.4 460.8L311.9 460.8L310.3 460.2L308.6 459.2L306.9 457.7L305.2 455.8L303.6 453.6L302.1 451.2L300.9 448.6L299.9 445.9L299.3 443.3Z" fill="url(#gs)"/>
<g clip-path="url(#cm1)"><path d="M306.8 441.7L306.9 440.0L307.3 438.8L307.9 437.9L308.9 437.6L310.1 437.8L311.4 438.5L312.7 439.7L314.0 441.2L315.1 443.1L316.0 445.1L316.6 447.1L316.9 449.0L316.9 450.6L316.5 451.9L315.8 452.7L314.8 453.0L313.6 452.8L312.4 452.1L311.0 450.9L309.8 449.3L308.7 447.5L307.8 445.5L307.1 443.5Z" fill="url(#gsi)" class="e2"/></g>
<path d="M298.9 440.9L298.9 438.7L299.2 436.8L299.9 435.3L300.9 434.3L302.1 433.8L303.5 433.8L305.1 434.3L306.9 435.3L308.6 436.8L310.3 438.7L311.9 440.9L313.4 443.4L314.7 446.0L315.6 448.7L316.3 451.3L316.6 453.7L316.6 456.0L316.3 457.8L315.6 459.3L314.6 460.3L313.4 460.8L311.9 460.8L310.3 460.2L308.6 459.2L306.9 457.7L305.2 455.8L303.6 453.6L302.1 451.2L300.9 448.6L299.9 445.9L299.3 443.3Z" class="e"/>
<path d="M315.6 357.7L315.6 355.3L316.0 353.3L316.7 351.6L317.7 350.5L319.0 349.8L320.5 349.7L322.2 350.2L324.0 351.2L325.9 352.7L327.7 354.6L329.4 356.9L330.9 359.4L332.2 362.2L333.2 365.0L333.9 367.8L334.3 370.4L334.2 372.8L333.9 374.8L333.1 376.4L332.1 377.5L330.8 378.2L329.2 378.2L327.5 377.7L325.7 376.7L323.9 375.3L322.1 373.3L320.5 371.1L319.0 368.5L317.7 365.8L316.7 363.0L316.0 360.3Z" fill="url(#gs)"/>
<g clip-path="url(#cm2)"><path d="M323.9 358.4L323.9 356.7L324.4 355.3L325.1 354.4L326.1 353.9L327.3 354.1L328.7 354.8L330.1 355.9L331.4 357.5L332.6 359.4L333.5 361.5L334.2 363.6L334.5 365.7L334.4 367.4L334.0 368.8L333.3 369.7L332.2 370.1L331.0 370.0L329.7 369.3L328.3 368.1L326.9 366.5L325.8 364.6L324.8 362.5L324.2 360.4Z" fill="url(#gsi)" class="e2"/></g>
<path d="M315.6 357.7L315.6 355.3L316.0 353.3L316.7 351.6L317.7 350.5L319.0 349.8L320.5 349.7L322.2 350.2L324.0 351.2L325.9 352.7L327.7 354.6L329.4 356.9L330.9 359.4L332.2 362.2L333.2 365.0L333.9 367.8L334.3 370.4L334.2 372.8L333.9 374.8L333.1 376.4L332.1 377.5L330.8 378.2L329.2 378.2L327.5 377.7L325.7 376.7L323.9 375.3L322.1 373.3L320.5 371.1L319.0 368.5L317.7 365.8L316.7 363.0L316.0 360.3Z" class="e"/>
<path d="M382.3 501.4L382.3 499.2L382.8 497.3L383.5 495.8L384.6 494.9L386.0 494.4L387.6 494.4L389.4 495.0L391.2 496.1L393.1 497.7L394.9 499.7L396.6 502.1L398.2 504.6L399.5 507.4L400.5 510.1L401.1 512.8L401.4 515.3L401.3 517.6L400.9 519.5L400.1 520.9L399.0 521.9L397.6 522.3L396.0 522.2L394.2 521.6L392.4 520.5L390.5 518.9L388.7 516.9L387.0 514.6L385.5 512.0L384.2 509.3L383.2 506.6L382.6 503.9Z" fill="url(#gs)"/>
<g clip-path="url(#cm3)"><path d="M390.6 502.3L390.7 500.6L391.1 499.4L391.9 498.6L393.0 498.3L394.3 498.5L395.6 499.3L397.1 500.6L398.4 502.2L399.6 504.1L400.5 506.2L401.2 508.2L401.4 510.2L401.3 511.8L400.8 513.1L400.0 513.9L399.0 514.2L397.7 513.9L396.3 513.1L394.9 511.9L393.5 510.2L392.4 508.3L391.4 506.3L390.8 504.2Z" fill="url(#gsi)" class="e2"/></g>
<path d="M382.3 501.4L382.3 499.2L382.8 497.3L383.5 495.8L384.6 494.9L386.0 494.4L387.6 494.4L389.4 495.0L391.2 496.1L393.1 497.7L394.9 499.7L396.6 502.1L398.2 504.6L399.5 507.4L400.5 510.1L401.1 512.8L401.4 515.3L401.3 517.6L400.9 519.5L400.1 520.9L399.0 521.9L397.6 522.3L396.0 522.2L394.2 521.6L392.4 520.5L390.5 518.9L388.7 516.9L387.0 514.6L385.5 512.0L384.2 509.3L383.2 506.6L382.6 503.9Z" class="e"/>
<path d="M403.5 417.7L403.6 415.3L404.1 413.2L404.9 411.6L406.1 410.5L407.5 409.9L409.2 409.8L411.1 410.4L413.0 411.5L415.0 413.1L417.0 415.1L418.8 417.5L420.4 420.2L421.7 423.0L422.7 425.9L423.4 428.8L423.7 431.5L423.6 433.9L423.1 436.0L422.3 437.6L421.1 438.7L419.6 439.2L417.9 439.2L416.1 438.7L414.1 437.6L412.1 436.0L410.2 433.9L408.4 431.6L406.9 428.9L405.5 426.1L404.5 423.2L403.8 420.4Z" fill="url(#gs)"/>
<g clip-path="url(#cm4)"><path d="M412.2 418.6L412.3 416.8L412.8 415.4L413.7 414.4L414.8 414.1L416.1 414.3L417.6 415.0L419.1 416.3L420.5 418.0L421.8 420.0L422.7 422.1L423.4 424.3L423.7 426.4L423.5 428.1L423.0 429.5L422.2 430.4L421.0 430.8L419.7 430.6L418.2 429.8L416.7 428.6L415.3 426.9L414.1 424.9L413.1 422.8L412.5 420.6Z" fill="url(#gsi)" class="e2"/></g>
<path d="M403.5 417.7L403.6 415.3L404.1 413.2L404.9 411.6L406.1 410.5L407.5 409.9L409.2 409.8L411.1 410.4L413.0 411.5L415.0 413.1L417.0 415.1L418.8 417.5L420.4 420.2L421.7 423.0L422.7 425.9L423.4 428.8L423.7 431.5L423.6 433.9L423.1 436.0L422.3 437.6L421.1 438.7L419.6 439.2L417.9 439.2L416.1 438.7L414.1 437.6L412.1 436.0L410.2 433.9L408.4 431.6L406.9 428.9L405.5 426.1L404.5 423.2L403.8 420.4Z" class="e"/>
<path d="M472.5 567.0L472.6 564.7L473.2 562.8L474.1 561.3L475.3 560.4L476.8 560.0L478.6 560.1L480.5 560.8L482.5 562.0L484.6 563.7L486.5 565.8L488.3 568.3L490.0 571.0L491.3 573.8L492.3 576.7L492.9 579.4L493.2 582.0L493.0 584.3L492.4 586.2L491.5 587.6L490.3 588.5L488.7 588.9L486.9 588.7L485.0 588.0L483.0 586.8L481.0 585.1L479.1 583.0L477.3 580.6L475.7 577.9L474.4 575.1L473.4 572.3L472.7 569.5Z" fill="url(#gs)"/>
<g clip-path="url(#cm5)"><path d="M481.1 567.9L481.3 566.2L481.8 565.0L482.7 564.2L483.9 563.9L485.3 564.2L486.9 565.1L488.4 566.4L489.8 568.2L491.1 570.2L492.0 572.3L492.7 574.4L492.9 576.4L492.7 578.1L492.2 579.4L491.2 580.1L490.0 580.4L488.6 580.0L487.1 579.2L485.6 577.8L484.2 576.1L482.9 574.1L482.0 572.0L481.4 569.9Z" fill="url(#gsi)" class="e2"/></g>
<path d="M472.5 567.0L472.6 564.7L473.2 562.8L474.1 561.3L475.3 560.4L476.8 560.0L478.6 560.1L480.5 560.8L482.5 562.0L484.6 563.7L486.5 565.8L488.3 568.3L490.0 571.0L491.3 573.8L492.3 576.7L492.9 579.4L493.2 582.0L493.0 584.3L492.4 586.2L491.5 587.6L490.3 588.5L488.7 588.9L486.9 588.7L485.0 588.0L483.0 586.8L481.0 585.1L479.1 583.0L477.3 580.6L475.7 577.9L474.4 575.1L473.4 572.3L472.7 569.5Z" class="e"/>
<path d="M523.2 422.2L524.9 421.4L526.9 420.8L528.9 420.4L531.1 420.2L533.3 420.2L535.4 420.4L537.5 420.7L539.5 421.3L541.3 422.0L542.9 422.9L544.2 423.9L545.3 425.0L546.0 426.2L546.4 427.4L546.4 428.7L546.1 430.0L545.5 431.2L544.5 432.3L543.3 433.4L541.8 434.3L540.0 435.1L538.1 435.7L536.0 436.1L533.8 436.3L531.6 436.3L529.4 436.1L527.3 435.8L525.3 435.2L523.5 434.5L521.9 433.6L520.6 432.6L519.6 431.4L518.9 430.2L518.5 429.0L518.5 427.7L518.8 426.5L519.4 425.3L520.4 424.1L521.6 423.1Z" fill="url(#gsc)"/>
<g clip-path="url(#cs0)"><path d="M523.2 431.1L524.9 430.3L526.9 429.8L528.9 429.3L531.1 429.1L533.3 429.1L535.4 429.3L537.5 429.6L539.5 430.2L541.3 430.9L542.9 431.8L544.2 432.8L545.2 433.9L545.9 435.1L546.3 436.4L546.4 437.6L546.1 438.9L545.5 440.1L544.5 441.3L543.3 442.3L541.7 443.2L540.0 444.0L538.0 444.6L536.0 445.0L533.8 445.2L531.6 445.3L529.4 445.1L527.3 444.7L525.3 444.2L523.5 443.4L521.9 442.5L520.6 441.5L519.6 440.4L518.9 439.2L518.5 437.9L518.5 436.6L518.8 435.4L519.4 434.2L520.4 433.0L521.7 432.0Z" fill="#6a6862" class="e2"/>
<path d="M527.4 433.8L528.3 433.4L529.4 433.1L530.5 432.9L531.7 432.8L532.9 432.7L534.1 432.8L535.2 433.0L536.3 433.3L537.3 433.7L538.1 434.2L538.8 434.8L539.4 435.4L539.8 436.0L540.0 436.7L540.0 437.4L539.9 438.1L539.5 438.8L539.0 439.4L538.3 440.0L537.5 440.5L536.5 440.9L535.5 441.2L534.3 441.4L533.2 441.6L532.0 441.6L530.8 441.5L529.6 441.3L528.6 441.0L527.6 440.6L526.7 440.1L526.0 439.5L525.4 438.9L525.0 438.2L524.8 437.6L524.8 436.9L525.0 436.2L525.3 435.5L525.9 434.9L526.6 434.3Z" fill="#3d3b37" class="e2"/>
<g clip-path="url(#ct0)"><path d="M527.4 441.1L528.3 440.6L529.4 440.3L530.5 440.1L531.7 440.0L532.9 440.0L534.1 440.1L535.2 440.3L536.3 440.6L537.2 441.0L538.1 441.4L538.8 442.0L539.4 442.6L539.8 443.3L540.0 444.0L540.0 444.6L539.9 445.3L539.5 446.0L539.0 446.6L538.3 447.2L537.5 447.7L536.5 448.1L535.5 448.4L534.3 448.7L533.2 448.8L532.0 448.8L530.8 448.7L529.6 448.5L528.6 448.2L527.6 447.8L526.7 447.3L526.0 446.8L525.4 446.1L525.1 445.5L524.9 444.8L524.8 444.1L525.0 443.4L525.4 442.8L525.9 442.1L526.6 441.6Z" fill="#55534e" class="e2"/></g>
</g>
<path d="M523.2 422.2L524.9 421.4L526.9 420.8L528.9 420.4L531.1 420.2L533.3 420.2L535.4 420.4L537.5 420.7L539.5 421.3L541.3 422.0L542.9 422.9L544.2 423.9L545.3 425.0L546.0 426.2L546.4 427.4L546.4 428.7L546.1 430.0L545.5 431.2L544.5 432.3L543.3 433.4L541.8 434.3L540.0 435.1L538.1 435.7L536.0 436.1L533.8 436.3L531.6 436.3L529.4 436.1L527.3 435.8L525.3 435.2L523.5 434.5L521.9 433.6L520.6 432.6L519.6 431.4L518.9 430.2L518.5 429.0L518.5 427.7L518.8 426.5L519.4 425.3L520.4 424.1L521.6 423.1Z" class="e"/>
<path d="M992.1 184.1L993.4 183.5L994.9 183.1L996.6 182.8L998.3 182.7L1000.2 182.6L1002.1 182.8L1004.0 183.0L1005.8 183.4L1007.5 183.9L1009.1 184.6L1010.5 185.3L1011.6 186.1L1012.6 187.0L1013.2 187.9L1013.6 188.8L1013.6 189.7L1013.4 190.6L1012.9 191.4L1012.1 192.2L1011.0 192.8L1009.7 193.4L1008.2 193.8L1006.5 194.1L1004.7 194.3L1002.8 194.3L1000.9 194.2L999.0 193.9L997.2 193.5L995.5 193.0L993.9 192.3L992.5 191.6L991.3 190.8L990.4 189.9L989.8 189.0L989.4 188.1L989.4 187.2L989.6 186.3L990.2 185.5L991.0 184.8Z" fill="url(#gsc)"/>
<g clip-path="url(#cs1)"><path d="M991.0 192.3L992.3 191.7L993.8 191.3L995.5 191.0L997.2 190.8L999.1 190.8L1001.0 190.9L1002.9 191.2L1004.7 191.6L1006.4 192.1L1008.0 192.7L1009.3 193.5L1010.5 194.3L1011.4 195.1L1012.1 196.0L1012.4 197.0L1012.5 197.9L1012.3 198.7L1011.7 199.6L1010.9 200.3L1009.9 201.0L1008.6 201.6L1007.0 202.0L1005.4 202.3L1003.6 202.5L1001.7 202.5L999.8 202.4L997.9 202.1L996.1 201.7L994.4 201.2L992.8 200.5L991.4 199.8L990.2 199.0L989.3 198.1L988.7 197.2L988.4 196.3L988.3 195.4L988.6 194.5L989.1 193.7L989.9 192.9Z" fill="#6a6862" class="e2"/>
<path d="M995.3 194.2L996.0 193.9L996.8 193.7L997.7 193.5L998.7 193.4L999.7 193.4L1000.7 193.5L1001.7 193.6L1002.7 193.9L1003.7 194.1L1004.5 194.5L1005.3 194.9L1005.9 195.3L1006.4 195.8L1006.8 196.3L1007.0 196.8L1007.0 197.3L1006.9 197.8L1006.6 198.2L1006.1 198.6L1005.5 199.0L1004.8 199.3L1004.0 199.5L1003.1 199.7L1002.1 199.8L1001.1 199.8L1000.1 199.7L999.0 199.6L998.0 199.4L997.1 199.1L996.2 198.7L995.5 198.3L994.9 197.9L994.4 197.4L994.0 196.9L993.8 196.4L993.8 195.9L993.9 195.4L994.2 195.0L994.7 194.6Z" fill="#3d3b37" class="e2"/>
<g clip-path="url(#ct1)"><path d="M994.4 200.8L995.1 200.5L995.9 200.3L996.8 200.1L997.8 200.1L998.8 200.0L999.8 200.1L1000.8 200.3L1001.8 200.5L1002.8 200.8L1003.6 201.1L1004.4 201.5L1005.0 202.0L1005.5 202.4L1005.9 202.9L1006.0 203.4L1006.1 203.9L1005.9 204.4L1005.7 204.9L1005.2 205.3L1004.6 205.6L1003.9 205.9L1003.1 206.2L1002.2 206.3L1001.2 206.4L1000.2 206.4L999.2 206.4L998.1 206.2L997.1 206.0L996.2 205.7L995.4 205.4L994.6 205.0L994.0 204.5L993.5 204.0L993.1 203.5L992.9 203.0L992.9 202.5L993.0 202.1L993.3 201.6L993.8 201.2Z" fill="#55534e" class="e2"/></g>
</g>
<path d="M992.1 184.1L993.4 183.5L994.9 183.1L996.6 182.8L998.3 182.7L1000.2 182.6L1002.1 182.8L1004.0 183.0L1005.8 183.4L1007.5 183.9L1009.1 184.6L1010.5 185.3L1011.6 186.1L1012.6 187.0L1013.2 187.9L1013.6 188.8L1013.6 189.7L1013.4 190.6L1012.9 191.4L1012.1 192.2L1011.0 192.8L1009.7 193.4L1008.2 193.8L1006.5 194.1L1004.7 194.3L1002.8 194.3L1000.9 194.2L999.0 193.9L997.2 193.5L995.5 193.0L993.9 192.3L992.5 191.6L991.3 190.8L990.4 189.9L989.8 189.0L989.4 188.1L989.4 187.2L989.6 186.3L990.2 185.5L991.0 184.8Z" class="e"/>
<path d="M687.0 41.8L688.2 41.4L689.7 41.0L691.2 40.8L692.8 40.7L694.5 40.6L696.2 40.7L697.8 40.9L699.3 41.3L700.7 41.7L702.0 42.2L703.1 42.7L704.0 43.4L704.6 44.1L705.0 44.8L705.2 45.5L705.0 46.2L704.6 46.9L704.0 47.6L703.1 48.2L702.0 48.7L700.8 49.2L699.3 49.5L697.8 49.8L696.1 49.9L694.5 49.9L692.8 49.8L691.2 49.6L689.6 49.3L688.2 48.9L686.9 48.4L685.8 47.8L685.0 47.1L684.3 46.4L683.9 45.7L683.8 45.0L684.0 44.3L684.4 43.6L685.0 42.9L685.9 42.3Z" fill="url(#gsc)"/>
<g clip-path="url(#cs2)"><path d="M686.6 49.4L687.9 48.9L689.3 48.6L690.9 48.4L692.5 48.2L694.2 48.2L695.8 48.3L697.4 48.5L699.0 48.8L700.4 49.2L701.7 49.7L702.7 50.3L703.6 51.0L704.3 51.7L704.7 52.4L704.8 53.1L704.7 53.8L704.3 54.5L703.6 55.2L702.8 55.8L701.7 56.3L700.4 56.8L699.0 57.1L697.4 57.4L695.8 57.5L694.1 57.5L692.4 57.4L690.8 57.2L689.3 56.9L687.8 56.5L686.6 56.0L685.5 55.4L684.6 54.7L684.0 54.0L683.6 53.3L683.5 52.6L683.6 51.9L684.0 51.2L684.7 50.5L685.6 49.9Z" fill="#6a6862" class="e2"/>
<path d="M690.0 51.0L690.7 50.7L691.5 50.5L692.4 50.4L693.2 50.3L694.1 50.3L695.1 50.4L695.9 50.5L696.8 50.7L697.6 50.9L698.2 51.2L698.8 51.5L699.3 51.8L699.7 52.2L699.9 52.6L699.9 53.0L699.9 53.4L699.7 53.8L699.3 54.1L698.8 54.5L698.2 54.8L697.5 55.0L696.8 55.2L695.9 55.3L695.0 55.4L694.1 55.4L693.2 55.3L692.3 55.2L691.5 55.1L690.7 54.8L690.0 54.6L689.4 54.2L689.0 53.9L688.6 53.5L688.4 53.1L688.3 52.7L688.4 52.3L688.6 51.9L689.0 51.6L689.5 51.2Z" fill="#3d3b37" class="e2"/>
<g clip-path="url(#ct2)"><path d="M689.8 57.1L690.5 56.9L691.2 56.7L692.1 56.5L693.0 56.5L693.9 56.5L694.8 56.5L695.7 56.6L696.5 56.8L697.3 57.0L698.0 57.3L698.5 57.6L699.0 58.0L699.4 58.4L699.6 58.8L699.7 59.2L699.6 59.5L699.4 59.9L699.0 60.3L698.5 60.6L698.0 60.9L697.3 61.2L696.5 61.4L695.6 61.5L694.8 61.6L693.8 61.6L692.9 61.5L692.1 61.4L691.2 61.2L690.4 61.0L689.7 60.7L689.2 60.4L688.7 60.0L688.3 59.7L688.1 59.3L688.1 58.9L688.1 58.5L688.3 58.1L688.7 57.7L689.2 57.4Z" fill="#55534e" class="e2"/></g>
</g>
<path d="M687.0 41.8L688.2 41.4L689.7 41.0L691.2 40.8L692.8 40.7L694.5 40.6L696.2 40.7L697.8 40.9L699.3 41.3L700.7 41.7L702.0 42.2L703.1 42.7L704.0 43.4L704.6 44.1L705.0 44.8L705.2 45.5L705.0 46.2L704.6 46.9L704.0 47.6L703.1 48.2L702.0 48.7L700.8 49.2L699.3 49.5L697.8 49.8L696.1 49.9L694.5 49.9L692.8 49.8L691.2 49.6L689.6 49.3L688.2 48.9L686.9 48.4L685.8 47.8L685.0 47.1L684.3 46.4L683.9 45.7L683.8 45.0L684.0 44.3L684.4 43.6L685.0 42.9L685.9 42.3Z" class="e"/>
<path d="M226.9 230.8L228.6 230.2L230.4 229.7L232.3 229.4L234.2 229.3L236.1 229.2L238.0 229.4L239.8 229.7L241.4 230.1L242.8 230.6L244.1 231.3L245.1 232.1L245.8 232.9L246.2 233.9L246.4 234.8L246.2 235.8L245.8 236.8L245.0 237.7L244.0 238.6L242.7 239.4L241.2 240.1L239.5 240.7L237.7 241.1L235.9 241.5L233.9 241.6L232.0 241.7L230.1 241.5L228.3 241.2L226.7 240.8L225.2 240.2L224.0 239.6L223.0 238.8L222.3 237.9L221.8 237.0L221.7 236.0L221.9 235.1L222.4 234.1L223.1 233.2L224.2 232.3L225.5 231.5Z" fill="url(#gsc)"/>
<g clip-path="url(#cs3)"><path d="M227.7 239.1L229.3 238.5L231.1 238.0L233.0 237.7L234.9 237.5L236.8 237.5L238.7 237.7L240.5 237.9L242.1 238.4L243.5 238.9L244.8 239.6L245.8 240.4L246.5 241.2L246.9 242.1L247.1 243.1L246.9 244.1L246.4 245.1L245.7 246.0L244.7 246.9L243.4 247.7L241.9 248.4L240.3 249.0L238.5 249.5L236.6 249.8L234.6 250.0L232.7 250.0L230.8 249.8L229.0 249.6L227.4 249.1L225.9 248.6L224.7 247.9L223.7 247.1L223.0 246.2L222.6 245.3L222.5 244.3L222.6 243.4L223.1 242.4L223.9 241.4L224.9 240.6L226.2 239.8Z" fill="#6a6862" class="e2"/>
<path d="M230.9 241.2L231.8 240.9L232.8 240.6L233.8 240.4L234.8 240.3L235.9 240.3L236.9 240.4L237.9 240.6L238.8 240.8L239.6 241.1L240.2 241.5L240.8 241.9L241.2 242.4L241.4 242.9L241.5 243.4L241.4 243.9L241.1 244.5L240.7 245.0L240.2 245.4L239.5 245.9L238.7 246.3L237.8 246.6L236.8 246.8L235.8 247.0L234.7 247.1L233.6 247.1L232.6 247.1L231.7 246.9L230.8 246.7L230.0 246.4L229.3 246.0L228.8 245.6L228.4 245.1L228.1 244.6L228.1 244.1L228.2 243.5L228.4 243.0L228.8 242.5L229.4 242.0L230.1 241.6Z" fill="#3d3b37" class="e2"/>
<g clip-path="url(#ct3)"><path d="M231.5 247.9L232.4 247.6L233.4 247.3L234.4 247.2L235.4 247.1L236.5 247.0L237.5 247.1L238.5 247.3L239.3 247.5L240.1 247.8L240.8 248.2L241.3 248.6L241.7 249.1L242.0 249.6L242.1 250.1L242.0 250.6L241.7 251.2L241.3 251.7L240.7 252.2L240.0 252.6L239.2 253.0L238.3 253.3L237.4 253.6L236.3 253.8L235.3 253.9L234.2 253.9L233.2 253.8L232.2 253.6L231.4 253.4L230.6 253.1L229.9 252.7L229.3 252.3L229.0 251.8L228.7 251.3L228.7 250.8L228.8 250.2L229.0 249.7L229.4 249.2L230.0 248.7L230.7 248.3Z" fill="#55534e" class="e2"/></g>
</g>
<path d="M226.9 230.8L228.6 230.2L230.4 229.7L232.3 229.4L234.2 229.3L236.1 229.2L238.0 229.4L239.8 229.7L241.4 230.1L242.8 230.6L244.1 231.3L245.1 232.1L245.8 232.9L246.2 233.9L246.4 234.8L246.2 235.8L245.8 236.8L245.0 237.7L244.0 238.6L242.7 239.4L241.2 240.1L239.5 240.7L237.7 241.1L235.9 241.5L233.9 241.6L232.0 241.7L230.1 241.5L228.3 241.2L226.7 240.8L225.2 240.2L224.0 239.6L223.0 238.8L222.3 237.9L221.8 237.0L221.7 236.0L221.9 235.1L222.4 234.1L223.1 233.2L224.2 232.3L225.5 231.5Z" class="e"/>
<path d="M214.0 235.1L529.7 442.7L1019.6 190.8" class="e"/>
<path d="M206.5 247.2L521.0 456.6L522.7 457.5L524.6 458.2L526.7 458.6L529.0 458.8L531.3 458.8L533.5 458.5L535.5 457.9L537.4 457.1L1026.2 202.9" class="e"/>
<path d="M206.9 251.2L521.0 460.9L522.7 461.8L524.6 462.5L526.8 463.0L529.0 463.2L531.3 463.1L533.5 462.8L535.5 462.3L537.4 461.5L1025.6 206.9" class="e"/>
<path d="M523.8 858.2L521.0 456.6" class="e"/>
<path d="M538.1 858.9L537.4 457.1" class="e"/>
<path d="M537.4 457.1L537.3 455.6L537.0 454.0L536.5 452.3L535.9 450.7L535.1 449.0L534.2 447.5L533.2 446.0L532.0 444.7L530.9 443.6L529.7 442.7" class="e"/>
<path d="M521.0 456.6L521.1 455.0L521.4 453.4L521.9 451.8L522.6 450.2L523.5 448.6L524.6 447.1L525.7 445.7L527.0 444.5L528.3 443.5L529.7 442.7" class="e"/>
<path d="M204.7 244.5L204.7 242.8L204.9 241.8L205.3 240.2L206.1 238.7L206.5 237.9L207.6 236.8L208.2 236.1L209.1 235.5L210.1 234.9L210.9 234.5L688.1 40.0L688.9 39.8L689.7 39.6L690.3 39.5L691.0 39.4L691.6 39.4L692.2 39.5L692.9 39.6L693.4 39.7L694.2 39.9L695.0 40.2L1022.9 190.4L1023.6 190.8L1024.6 191.5L1025.4 192.2L1026.0 192.8L1027.0 194.0L1027.6 195.4L1028.0 196.3L1028.3 197.9L1028.4 198.8L1028.3 200.5L974.2 575.1L973.9 576.1L973.2 577.0L972.2 577.8L538.1 858.9L536.5 859.7L534.7 860.3L532.7 860.7L530.8 860.7L528.8 860.5L526.9 860.0L525.2 859.2L523.8 858.2L244.1 625.3L243.2 624.4L242.7 623.4L242.5 622.3Z" class="s"/>
<circle cx="530.2" cy="448.6" r="1.3" fill="#f2f0ea" filter="url(#b1)"/>
</svg>
<div class="ui">
<div class="hdr" style="top:4px"><svg width="12" height="8" viewBox="0 0 12 8" style="left:4.3px;top:8.3px"><path d="M4.7 0.3V6.7L0.3 3.5ZM9.8 0.3V6.7L5.4 3.5Z" fill="#222"/></svg><span>BROWSER</span><svg width="10" height="10" viewBox="0 0 10 10" style="left:277.5px;top:6.8px"><circle cx="5" cy="5" r="4.6" fill="#222"/><rect x="2.2" y="4.3" width="5.6" height="1.5" fill="#f2f2f2"/></svg></div>
<div class="rb" style="left:40px;top:34.2px;width:236px"></div>
<svg width="13" height="13" viewBox="0 0 13 13" style="left:20px;top:38px"><defs><linearGradient id="tg999" x1="0" y1="0" x2="1" y2="1"><stop offset="0.3" stop-color="#f0f0f0"/><stop offset="1" stop-color="#555"/></linearGradient></defs><path d="M11.3 1.4V11.4H1.3Z" fill="url(#tg999)" stroke="#111" stroke-width="1.3" stroke-linejoin="round"/></svg>
<svg width="18" height="12" viewBox="0 0 18 12" style="left:42px;top:38px"><path d="M0.6 6C3 1.6 6 0.9 9 0.9S15 1.6 17.4 6C15 10.4 12 11.1 9 11.1S3 10.4 0.6 6Z" fill="#9b9b9b"/><circle cx="9" cy="5.8" r="3.1" fill="none" stroke="#f4f4f4" stroke-width="1.1"/></svg>
<div class="hl" style="left:65px;top:36px;width:186px"></div>
<svg width="17" height="17" viewBox="0 0 17 17" style="left:67px;top:35.6px"><path d="M1.2 4.8L4.6 1H15.6V11.6L12 15.8H1.2Z" fill="#f4f5f8" stroke="#2a2f38" stroke-width="1.2" stroke-linejoin="round"/><path d="M1.2 4.8H12V15.8M12 4.8L15.6 1" fill="none" stroke="#9aa0ab" stroke-width="0.8"/><path d="M2 5.6H11.3V15H2Z" fill="#e4e6ec"/></svg>
<span class="tb" style="left:98px;top:37.5px">RedTeam Implant Case v2</span>
<svg width="14" height="14" viewBox="0 0 14 14" style="left:254px;top:37px"><circle cx="7" cy="7" r="5.8" fill="#fff" stroke="#222" stroke-width="1.2"/><circle cx="7" cy="7" r="2.3" fill="#222"/></svg>
<div class="rb" style="left:58px;top:58.2px;width:158px"></div>
<svg width="12" height="15" viewBox="0 0 12 15" style="left:39px;top:61px"><path d="M1.2 1.5H4.6L9.7 7.4L4.6 13.5H1.2Z" fill="#e4e4e6" stroke="#1c1c1c" stroke-width="1.15" stroke-linejoin="round"/></svg>
<svg width="16" height="16" viewBox="-8 -8 16 16" style="left:61px;top:60px"><g fill="#828282"><rect x="-1.7" y="-7.6" width="3.4" height="4" transform="rotate(0)"/><rect x="-1.7" y="-7.6" width="3.4" height="4" transform="rotate(45)"/><rect x="-1.7" y="-7.6" width="3.4" height="4" transform="rotate(90)"/><rect x="-1.7" y="-7.6" width="3.4" height="4" transform="rotate(135)"/><rect x="-1.7" y="-7.6" width="3.4" height="4" transform="rotate(180)"/><rect x="-1.7" y="-7.6" width="3.4" height="4" transform="rotate(225)"/><rect x="-1.7" y="-7.6" width="3.4" height="4" transform="rotate(270)"/><rect x="-1.7" y="-7.6" width="3.4" height="4" transform="rotate(315)"/></g><circle r="4.4" fill="none" stroke="#828282" stroke-width="3"/></svg>
<span class="t" style="left:91px;top:61.5px;letter-spacing:-0.24px">Impostazioni documento</span>
<div class="rb" style="left:58px;top:82.2px;width:118px"></div>
<svg width="12" height="15" viewBox="0 0 12 15" style="left:39px;top:85px"><path d="M1.2 1.5H4.6L9.7 7.4L4.6 13.5H1.2Z" fill="#e4e4e6" stroke="#1c1c1c" stroke-width="1.15" stroke-linejoin="round"/></svg>
<svg width="17" height="13" viewBox="0 0 17 13" style="left:61px;top:85px"><path d="M0.3 0.3H7.4L6.8 2H0.3Z" fill="#9a9a9a"/><path d="M0.3 2.8H7.2L8.2 1.3H16.2V12.5H0.3Z" fill="#9a9a9a"/></svg>
<span class="t" style="left:91px;top:85.5px;letter-spacing:-0.07px">Viste con nome</span>
<div class="rb" style="left:58px;top:106.2px;width:134px"></div>
<svg width="12" height="15" viewBox="0 0 12 15" style="left:39px;top:109px"><path d="M1.2 1.5H4.6L9.7 7.4L4.6 13.5H1.2Z" fill="#e4e4e6" stroke="#1c1c1c" stroke-width="1.15" stroke-linejoin="round"/></svg>
<svg width="17" height="13" viewBox="0 0 17 13" style="left:61px;top:109px"><path d="M0.3 0.3H7.4L6.8 2H0.3Z" fill="#9a9a9a"/><path d="M0.3 2.8H7.2L8.2 1.3H16.2V12.5H0.3Z" fill="#9a9a9a"/></svg>
<span class="t" style="left:91px;top:109.5px;letter-spacing:-0.12px">Gruppi di selezione</span>
<div class="rb" style="left:58px;top:130.2px;width:103px"></div>
<svg width="12" height="15" viewBox="0 0 12 15" style="left:39px;top:133px"><path d="M1.2 1.5H4.6L9.7 7.4L4.6 13.5H1.2Z" fill="#e4e4e6" stroke="#1c1c1c" stroke-width="1.15" stroke-linejoin="round"/></svg>
<svg width="18" height="14" viewBox="0 0 18 14" style="left:60px;top:133px"><path d="M1 7C3.2 3 6 2.2 9 2.2S14.8 3 17 7C14.8 11 12 11.8 9 11.8S3.2 11 1 7Z" fill="none" stroke="#8c8c8c" stroke-width="0.9"/><path d="M6.2 4.2A3.6 3.6 0 0 0 11.6 9.6M7 3.4A3.6 3.6 0 0 1 12.3 8.8" fill="none" stroke="#8c8c8c" stroke-width="0.9"/><path d="M3 1L15 13" stroke="#6e6e6e" stroke-width="0.9"/></svg>
<svg width="17" height="13" viewBox="0 0 17 13" style="left:86px;top:133px"><path d="M0.3 0.3H7.4L6.8 2H0.3Z" fill="#9a9a9a"/><path d="M0.3 2.8H7.2L8.2 1.3H16.2V12.5H0.3Z" fill="#9a9a9a"/></svg>
<span class="t" style="left:116px;top:133.5px;letter-spacing:-0.24px">Origine</span>
<div class="rb" style="left:58px;top:154.2px;width:95px"></div>
<svg width="13" height="13" viewBox="0 0 13 13" style="left:38px;top:157px"><defs><linearGradient id="tg10" x1="0" y1="0" x2="1" y2="1"><stop offset="0.3" stop-color="#f0f0f0"/><stop offset="1" stop-color="#555"/></linearGradient></defs><path d="M11.3 1.4V11.4H1.3Z" fill="url(#tg10)" stroke="#111" stroke-width="1.3" stroke-linejoin="round"/></svg>
<svg width="18" height="12" viewBox="0 0 18 12" style="left:60px;top:158px"><path d="M0.6 6C3 1.6 6 0.9 9 0.9S15 1.6 17.4 6C15 10.4 12 11.1 9 11.1S3 10.4 0.6 6Z" fill="#9b9b9b"/><circle cx="9" cy="5.8" r="3.1" fill="none" stroke="#f4f4f4" stroke-width="1.1"/></svg>
<svg width="17" height="13" viewBox="0 0 17 13" style="left:86px;top:157px"><path d="M0.3 0.3H7.4L6.8 2H0.3Z" fill="#9a9a9a"/><path d="M0.3 2.8H7.2L8.2 1.3H16.2V12.5H0.3Z" fill="#9a9a9a"/></svg>
<span class="t" style="left:116px;top:157.5px;letter-spacing:-0.18px">Corpi</span>
<div class="rb" style="left:76px;top:178.2px;width:122px"></div>
<svg width="18" height="12" viewBox="0 0 18 12" style="left:78px;top:182px"><path d="M0.6 6C3 1.6 6 0.9 9 0.9S15 1.6 17.4 6C15 10.4 12 11.1 9 11.1S3 10.4 0.6 6Z" fill="#9b9b9b"/><circle cx="9" cy="5.8" r="3.1" fill="none" stroke="#f4f4f4" stroke-width="1.1"/></svg>
<svg width="18" height="18" viewBox="0 0 18 18" style="left:103px;top:179px"><defs><linearGradient id="bg14" x1="0" y1="0" x2="1" y2="0"><stop offset="0" stop-color="#c3c8d2"/><stop offset="0.5" stop-color="#eef0f4"/><stop offset="1" stop-color="#b9bec8"/></linearGradient></defs><rect x="1" y="1" width="15.6" height="15.4" rx="4.2" ry="3.6" fill="#fdfdfe" stroke="#2c3442" stroke-width="1.1"/><path d="M5 6.8H15.6V13C15.6 15 14.5 15.6 13 15.6H7.5C5.6 15.6 5 14.6 5 13Z" fill="url(#bg14)"/></svg>
<span class="t" style="left:134px;top:181.5px;letter-spacing:0.11px">case_body</span>
<div class="rb" style="left:76px;top:202.2px;width:126px"></div>
<svg width="18" height="12" viewBox="0 0 18 12" style="left:78px;top:206px"><path d="M0.6 6C3 1.6 6 0.9 9 0.9S15 1.6 17.4 6C15 10.4 12 11.1 9 11.1S3 10.4 0.6 6Z" fill="#9b9b9b"/><circle cx="9" cy="5.8" r="3.1" fill="none" stroke="#f4f4f4" stroke-width="1.1"/></svg>
<svg width="18" height="18" viewBox="0 0 18 18" style="left:103px;top:203px"><defs><linearGradient id="bg16" x1="0" y1="0" x2="1" y2="0"><stop offset="0" stop-color="#c3c8d2"/><stop offset="0.5" stop-color="#eef0f4"/><stop offset="1" stop-color="#b9bec8"/></linearGradient></defs><rect x="1" y="1" width="15.6" height="15.4" rx="4.2" ry="3.6" fill="#fdfdfe" stroke="#2c3442" stroke-width="1.1"/><path d="M5 6.8H15.6V13C15.6 15 14.5 15.6 13 15.6H7.5C5.6 15.6 5 14.6 5 13Z" fill="url(#bg16)"/></svg>
<span class="t" style="left:134px;top:205.5px;letter-spacing:0.15px">case_cover</span>
<div class="rb" style="left:76px;top:226.2px;width:139px"></div>
<svg width="18" height="14" viewBox="0 0 18 14" style="left:78px;top:229px"><path d="M1 7C3.2 3 6 2.2 9 2.2S14.8 3 17 7C14.8 11 12 11.8 9 11.8S3.2 11 1 7Z" fill="none" stroke="#8c8c8c" stroke-width="0.9"/><path d="M6.2 4.2A3.6 3.6 0 0 0 11.6 9.6M7 3.4A3.6 3.6 0 0 1 12.3 8.8" fill="none" stroke="#8c8c8c" stroke-width="0.9"/><path d="M3 1L15 13" stroke="#6e6e6e" stroke-width="0.9"/></svg>
<svg width="18" height="18" viewBox="0 0 18 18" style="left:103px;top:227px"><defs><linearGradient id="bg18" x1="0" y1="0" x2="1" y2="0"><stop offset="0" stop-color="#c3c8d2"/><stop offset="0.5" stop-color="#eef0f4"/><stop offset="1" stop-color="#b9bec8"/></linearGradient></defs><rect x="1" y="1" width="15.6" height="15.4" rx="4.2" ry="3.6" fill="#fdfdfe" stroke="#2c3442" stroke-width="1.1"/><path d="M5 6.8H15.6V13C15.6 15 14.5 15.6 13 15.6H7.5C5.6 15.6 5 14.6 5 13Z" fill="url(#bg18)"/></svg>
<span class="t" style="left:134px;top:229.5px;letter-spacing:-0.05px">passthrough_1</span>
<div class="rb" style="left:76px;top:250.2px;width:143px"></div>
<svg width="18" height="14" viewBox="0 0 18 14" style="left:78px;top:253px"><path d="M1 7C3.2 3 6 2.2 9 2.2S14.8 3 17 7C14.8 11 12 11.8 9 11.8S3.2 11 1 7Z" fill="none" stroke="#8c8c8c" stroke-width="0.9"/><path d="M6.2 4.2A3.6 3.6 0 0 0 11.6 9.6M7 3.4A3.6 3.6 0 0 1 12.3 8.8" fill="none" stroke="#8c8c8c" stroke-width="0.9"/><path d="M3 1L15 13" stroke="#6e6e6e" stroke-width="0.9"/></svg>
<svg width="18" height="18" viewBox="0 0 18 18" style="left:103px;top:251px"><defs><linearGradient id="bg20" x1="0" y1="0" x2="1" y2="0"><stop offset="0" stop-color="#c3c8d2"/><stop offset="0.5" stop-color="#eef0f4"/><stop offset="1" stop-color="#b9bec8"/></linearGradient></defs><rect x="1" y="1" width="15.6" height="15.4" rx="4.2" ry="3.6" fill="#fdfdfe" stroke="#2c3442" stroke-width="1.1"/><path d="M5 6.8H15.6V13C15.6 15 14.5 15.6 13 15.6H7.5C5.6 15.6 5 14.6 5 13Z" fill="url(#bg20)"/></svg>
<span class="t" style="left:134px;top:253.5px;letter-spacing:-0.01px">passthrough_2</span>
<div class="rb" style="left:76px;top:274.2px;width:143px"></div>
<svg width="18" height="14" viewBox="0 0 18 14" style="left:78px;top:277px"><path d="M1 7C3.2 3 6 2.2 9 2.2S14.8 3 17 7C14.8 11 12 11.8 9 11.8S3.2 11 1 7Z" fill="none" stroke="#8c8c8c" stroke-width="0.9"/><path d="M6.2 4.2A3.6 3.6 0 0 0 11.6 9.6M7 3.4A3.6 3.6 0 0 1 12.3 8.8" fill="none" stroke="#8c8c8c" stroke-width="0.9"/><path d="M3 1L15 13" stroke="#6e6e6e" stroke-width="0.9"/></svg>
<svg width="18" height="18" viewBox="0 0 18 18" style="left:103px;top:275px"><defs><linearGradient id="bg22" x1="0" y1="0" x2="1" y2="0"><stop offset="0" stop-color="#c3c8d2"/><stop offset="0.5" stop-color="#eef0f4"/><stop offset="1" stop-color="#b9bec8"/></linearGradient></defs><rect x="1" y="1" width="15.6" height="15.4" rx="4.2" ry="3.6" fill="#fdfdfe" stroke="#2c3442" stroke-width="1.1"/><path d="M5 6.8H15.6V13C15.6 15 14.5 15.6 13 15.6H7.5C5.6 15.6 5 14.6 5 13Z" fill="url(#bg22)"/></svg>
<span class="t" style="left:134px;top:277.5px;letter-spacing:-0.01px">passthrough_3</span>
<div class="rb" style="left:76px;top:298.2px;width:151px"></div>
<svg width="18" height="14" viewBox="0 0 18 14" style="left:78px;top:301px"><path d="M1 7C3.2 3 6 2.2 9 2.2S14.8 3 17 7C14.8 11 12 11.8 9 11.8S3.2 11 1 7Z" fill="none" stroke="#8c8c8c" stroke-width="0.9"/><path d="M6.2 4.2A3.6 3.6 0 0 0 11.6 9.6M7 3.4A3.6 3.6 0 0 1 12.3 8.8" fill="none" stroke="#8c8c8c" stroke-width="0.9"/><path d="M3 1L15 13" stroke="#6e6e6e" stroke-width="0.9"/></svg>
<svg width="18" height="18" viewBox="0 0 18 18" style="left:103px;top:299px"><defs><linearGradient id="bg24" x1="0" y1="0" x2="1" y2="0"><stop offset="0" stop-color="#c3c8d2"/><stop offset="0.5" stop-color="#eef0f4"/><stop offset="1" stop-color="#b9bec8"/></linearGradient></defs><rect x="1" y="1" width="15.6" height="15.4" rx="4.2" ry="3.6" fill="#fdfdfe" stroke="#2c3442" stroke-width="1.1"/><path d="M5 6.8H15.6V13C15.6 15 14.5 15.6 13 15.6H7.5C5.6 15.6 5 14.6 5 13Z" fill="url(#bg24)"/></svg>
<span class="t" style="left:134px;top:301.5px;letter-spacing:0.23px">raspberry_tower</span>
<div class="rb" style="left:58px;top:322.2px;width:103px"></div>
<svg width="12" height="15" viewBox="0 0 12 15" style="left:39px;top:325px"><path d="M1.2 1.5H4.6L9.7 7.4L4.6 13.5H1.2Z" fill="#e4e4e6" stroke="#1c1c1c" stroke-width="1.15" stroke-linejoin="round"/></svg>
<svg width="18" height="12" viewBox="0 0 18 12" style="left:60px;top:326px"><path d="M0.6 6C3 1.6 6 0.9 9 0.9S15 1.6 17.4 6C15 10.4 12 11.1 9 11.1S3 10.4 0.6 6Z" fill="#9b9b9b"/><circle cx="9" cy="5.8" r="3.1" fill="none" stroke="#f4f4f4" stroke-width="1.1"/></svg>
<svg width="17" height="13" viewBox="0 0 17 13" style="left:86px;top:325px"><path d="M0.3 0.3H7.4L6.8 2H0.3Z" fill="#9a9a9a"/><path d="M0.3 2.8H7.2L8.2 1.3H16.2V12.5H0.3Z" fill="#9a9a9a"/></svg>
<span class="t" style="left:116px;top:325.5px;letter-spacing:0.07px">Schizzi</span>
<div class="rb" style="left:58px;top:346.2px;width:127px"></div>
<svg width="12" height="15" viewBox="0 0 12 15" style="left:39px;top:349px"><path d="M1.2 1.5H4.6L9.7 7.4L4.6 13.5H1.2Z" fill="#e4e4e6" stroke="#1c1c1c" stroke-width="1.15" stroke-linejoin="round"/></svg>
<svg width="18" height="12" viewBox="0 0 18 12" style="left:60px;top:350px"><path d="M0.6 6C3 1.6 6 0.9 9 0.9S15 1.6 17.4 6C15 10.4 12 11.1 9 11.1S3 10.4 0.6 6Z" fill="#9b9b9b"/><circle cx="9" cy="5.8" r="3.1" fill="none" stroke="#f4f4f4" stroke-width="1.1"/></svg>
<svg width="17" height="13" viewBox="0 0 17 13" style="left:86px;top:349px"><path d="M0.3 0.3H7.4L6.8 2H0.3Z" fill="#9a9a9a"/><path d="M0.3 2.8H7.2L8.2 1.3H16.2V12.5H0.3Z" fill="#9a9a9a"/></svg>
<span class="t" style="left:116px;top:349.5px;letter-spacing:-0.09px">Costruzione</span>
<div class="hdr" style="top:885.5px"><span style="letter-spacing:-0.95px">COMMENTI</span><svg width="10" height="10" viewBox="0 0 10 10" style="left:277.5px;top:6.8px"><circle cx="5" cy="5" r="4.6" fill="#222"/><rect x="2.2" y="4.3" width="5.6" height="1.4" fill="#f2f2f2"/><rect x="4.3" y="2.2" width="1.4" height="5.6" fill="#f2f2f2"/></svg></div>
<div class="note"><div style="top:20.7px">Top cover installed to</div><div style="top:46.4px">conceal internals</div></div>
<svg class="tbsvg" width="238" height="24" viewBox="416 885 238 24" style="left:416px;top:885px">
<defs>
<linearGradient id="lens" x1="0" y1="0" x2="0" y2="1"><stop offset="0" stop-color="#c9dfe0"/><stop offset="1" stop-color="#f4f8f8"/></linearGradient>
<linearGradient id="gridg" x1="0" y1="0" x2="0" y2="1"><stop offset="0" stop-color="#8b8f9a"/><stop offset="1" stop-color="#4a4e58"/></linearGradient>
</defs>
<rect x="416.3" y="885" width="236.5" height="23.2" fill="#f0f0f0"/>
<!-- orbit -->
<g fill="none" stroke="#1e1e1e" stroke-width="1.3">
<path d="M426.6 904.5V892.2" stroke-width="2.6"/><path d="M426.6 904V892.5" stroke="#fafafa" stroke-width="0.9"/>
<path d="M424 892.6L426.6 889.4L429.2 892.6Z" fill="#fafafa" stroke-width="1"/>
<path d="M424.6 895.3C421 895.8 419.4 897 419.4 898.2C419.4 900.3 423 901.5 427 901.5C431 901.5 434.6 900.3 434.6 898.2C434.6 897 432.6 895.8 429 895.3"/>
<path d="M424.4 899.2L421.2 901.6L424.6 903.9Z" fill="#1e1e1e" stroke-width="0.8"/>
</g>
<path d="M440.3 895.4H445.5L442.9 898.6Z" fill="#1e1e1e"/>
<!-- look at -->
<g stroke="#2a2f3a" stroke-width="1.3" fill="none">
<path d="M453.3 893.6L457.4 889.8L457.8 892L460.6 890.4L461 892L464 890.2V893.6" fill="#c8ccd6"/>
<rect x="452.9" y="893.6" width="14.3" height="10.4" fill="#f6f6f8"/>
<rect x="455.7" y="896.6" width="8.7" height="4.4" fill="#a9b0c2" stroke-width="1"/>
</g>
<!-- hand -->
<g stroke="#2a2a2a" stroke-width="0.9" fill="#fbfbfb" stroke-linejoin="round">
<path d="M482.3 904.6C481 902 479.6 899.6 478.8 898.4C478.3 897.4 479.6 896.6 480.6 897.6L482.4 899.6V891.8C482.4 890.6 484.2 890.6 484.3 891.8V890.6C484.4 889.4 486.3 889.4 486.4 890.6V891C486.5 889.8 488.4 889.8 488.5 891V892C488.6 891 490.4 891 490.5 892.2V896C491 894.6 493.2 894.8 492.8 896.4C492.4 899 491.4 902 490.2 904.6Z"/>
<path d="M484.3 892V897M486.4 891V897M488.5 892V897" fill="none" stroke-width="0.9"/>
</g>
<!-- zoom -->
<g>
<circle cx="509.6" cy="895.4" r="4.6" fill="url(#lens)" stroke="#2b2b2b" stroke-width="1.3"/>
<path d="M513 899.2L516.6 903.2" stroke="#2b2b2b" stroke-width="2.6" stroke-linecap="round"/>
<path d="M515.6 891.2H519.4M517.5 889.3V893M515.6 894.8H519.4" stroke="#2b2b2b" stroke-width="0.9" fill="none"/>
</g>
<!-- zoom window -->
<g>
<rect x="530.4" y="889.2" width="15" height="15" fill="none" stroke="#2b2b2b" stroke-width="0.9" stroke-dasharray="2 1.4"/>
<circle cx="536.6" cy="895.6" r="6" fill="url(#lens)" stroke="#2b2b2b" stroke-width="1.3"/>
<path d="M541.2 900.4L545 904" stroke="#2b2b2b" stroke-width="2.6" stroke-linecap="round"/>
</g>
<path d="M551 895.4H557L554 898.6Z" fill="#1e1e1e"/>
<!-- monitor -->
<g>
<rect x="563.6" y="889.4" width="15" height="11.6" rx="1.2" fill="#f2f2f2" stroke="#2b2b2b" stroke-width="1.2"/>
<rect x="565.6" y="891.4" width="11" height="7.6" fill="#86a6d8" stroke="#3a5a9a" stroke-width="0.8"/>
<path d="M569 901.4H573.4L574.4 903.4H568Z" fill="#d8d8d8" stroke="#777" stroke-width="0.5"/>
<path d="M566.6 904.2H575.6" stroke="#2b2b2b" stroke-width="1.1"/>
</g>
<path d="M581.2 895.4H587L584.1 898.6Z" fill="#1e1e1e"/>
<!-- grid -->
<g>
<rect x="594.4" y="889.2" width="15" height="15.4" fill="url(#gridg)"/>
<g fill="#f4f4f4"><rect x="595.3" y="890.1" width="1.9" height="1.9" opacity="1.00"/><rect x="598.2" y="890.1" width="1.9" height="1.9" opacity="1.00"/><rect x="601.1" y="890.1" width="1.9" height="1.9" opacity="1.00"/><rect x="604.0" y="890.1" width="1.9" height="1.9" opacity="1.00"/><rect x="606.9" y="890.1" width="1.9" height="1.9" opacity="1.00"/><rect x="595.3" y="893.1" width="1.9" height="1.9" opacity="0.88"/><rect x="598.2" y="893.1" width="1.9" height="1.9" opacity="0.88"/><rect x="601.1" y="893.1" width="1.9" height="1.9" opacity="0.88"/><rect x="604.0" y="893.1" width="1.9" height="1.9" opacity="0.88"/><rect x="606.9" y="893.1" width="1.9" height="1.9" opacity="0.88"/><rect x="595.3" y="896.0" width="1.9" height="1.9" opacity="0.76"/><rect x="598.2" y="896.0" width="1.9" height="1.9" opacity="0.76"/><rect x="601.1" y="896.0" width="1.9" height="1.9" opacity="0.76"/><rect x="604.0" y="896.0" width="1.9" height="1.9" opacity="0.76"/><rect x="606.9" y="896.0" width="1.9" height="1.9" opacity="0.76"/><rect x="595.3" y="899.0" width="1.9" height="1.9" opacity="0.64"/><rect x="598.2" y="899.0" width="1.9" height="1.9" opacity="0.64"/><rect x="601.1" y="899.0" width="1.9" height="1.9" opacity="0.64"/><rect x="604.0" y="899.0" width="1.9" height="1.9" opacity="0.64"/><rect x="606.9" y="899.0" width="1.9" height="1.9" opacity="0.64"/><rect x="595.3" y="901.9" width="1.9" height="1.9" opacity="0.52"/><rect x="598.2" y="901.9" width="1.9" height="1.9" opacity="0.52"/><rect x="601.1" y="901.9" width="1.9" height="1.9" opacity="0.52"/><rect x="604.0" y="901.9" width="1.9" height="1.9" opacity="0.52"/><rect x="606.9" y="901.9" width="1.9" height="1.9" opacity="0.52"/></g></g>
<path d="M612.2 895.4H618L615.1 898.6Z" fill="#1e1e1e"/>
<!-- viewports -->
<g stroke="#2c4a86" stroke-width="1.2" fill="#86a6d8">
<rect x="625.4" y="890.2" width="6.6" height="5.6" rx="0.8"/><rect x="633" y="890.2" width="6.6" height="5.6" rx="0.8"/>
<rect x="625.4" y="896.8" width="6.6" height="5.6" rx="0.8"/><rect x="633" y="896.8" width="6.6" height="5.6" rx="0.8"/>
</g>
<g fill="#b4c8ea"><rect x="627.2" y="892" width="3" height="2"/><rect x="634.8" y="892" width="3" height="2"/><rect x="627.2" y="898.6" width="3" height="2"/><rect x="634.8" y="898.6" width="3" height="2"/></g>
<path d="M643.2 895.4H649L646.1 898.6Z" fill="#1e1e1e"/>
</svg>
<svg width="140" height="120" viewBox="928 0 140 120" style="left:928px;top:0px">
<defs>
<radialGradient id="vsh" cx="0.5" cy="0.5" r="0.5"><stop offset="0" stop-color="#9a9a9a" stop-opacity="0.55"/><stop offset="1" stop-color="#9a9a9a" stop-opacity="0"/></radialGradient>
<filter id="vb" x="-30%" y="-30%" width="160%" height="160%"><feGaussianBlur stdDeviation="3"/></filter>
</defs>
<path d="M975 82L1003.2 104L1037.4 84L1032 96L1004 112L980 94Z" fill="#8a8a8a" opacity="0.45" filter="url(#vb)"/>
<path d="M1006.9 27.6L1040.8 44L1003.6 62.8L970.3 42.3Z" fill="#e9e9e9" fill-opacity="0.72"/>
<path d="M970.3 42.3L1003.6 62.8L1003.2 103.9L975 80.2Z" fill="#e2e2e4" fill-opacity="0.62"/>
<path d="M1003.6 62.8L1040.8 44L1037.4 82.6L1003.2 103.9Z" fill="#d9d9dc" fill-opacity="0.62"/>
<path d="M1003.6 55.5L1010.4 59L1010.2 66.4L1003.5 70L997 66.2L996.8 58.8Z" fill="#dfe3ec" opacity="0.9"/>
<g fill="none" stroke="#8a8a8a" stroke-width="0.9" stroke-dasharray="5 2.2">
<path d="M1006.9 27.6L1040.8 44L1003.6 62.8L970.3 42.3Z"/><path d="M970.3 42.3L975 80.2L1003.2 103.9L1037.4 82.6L1040.8 44"/><path d="M1003.6 62.8L1003.2 103.9"/>
</g>
<g font-family="Liberation Sans, sans-serif" fill="#7a7e88" font-size="8.5" text-anchor="middle">
<text transform="matrix(0.86 0.5 -0.86 0.45 1005.5 45.2)" x="0" y="3" letter-spacing="-0.3">ALTO</text>
<text transform="matrix(0.62 0.4 -0.02 1 988.2 71.5)" x="0" y="3.2" font-size="10.5" letter-spacing="-0.2">FRONTE</text>
<text transform="matrix(0.72 -0.36 -0.02 1 1021.5 73)" x="0" y="3.4" font-size="10.5" letter-spacing="-0.2">DESTRA</text>
</g>
<path d="M1007.4 19.5V27.4" stroke="#3fe03f" stroke-width="2"/>
<text x="1007.3" y="17.6" font-family="Liberation Sans, sans-serif" font-size="12.5" fill="#5be85b" text-anchor="middle">Y</text>
<path d="M969.8 83.2L974.6 80.4" stroke="#4a4af0" stroke-width="2"/>
<text x="962.6" y="91" font-family="Liberation Sans, sans-serif" font-size="12.5" fill="#6c6cf2" text-anchor="middle">Z</text>
<path d="M1037.2 82.8L1042.6 86.2" stroke="#f07070" stroke-width="2"/>
<text x="1048.4" y="95" font-family="Liberation Sans, sans-serif" font-size="12.5" fill="#f27878" text-anchor="middle">X</text>
</svg>
</div>
</body></html>
